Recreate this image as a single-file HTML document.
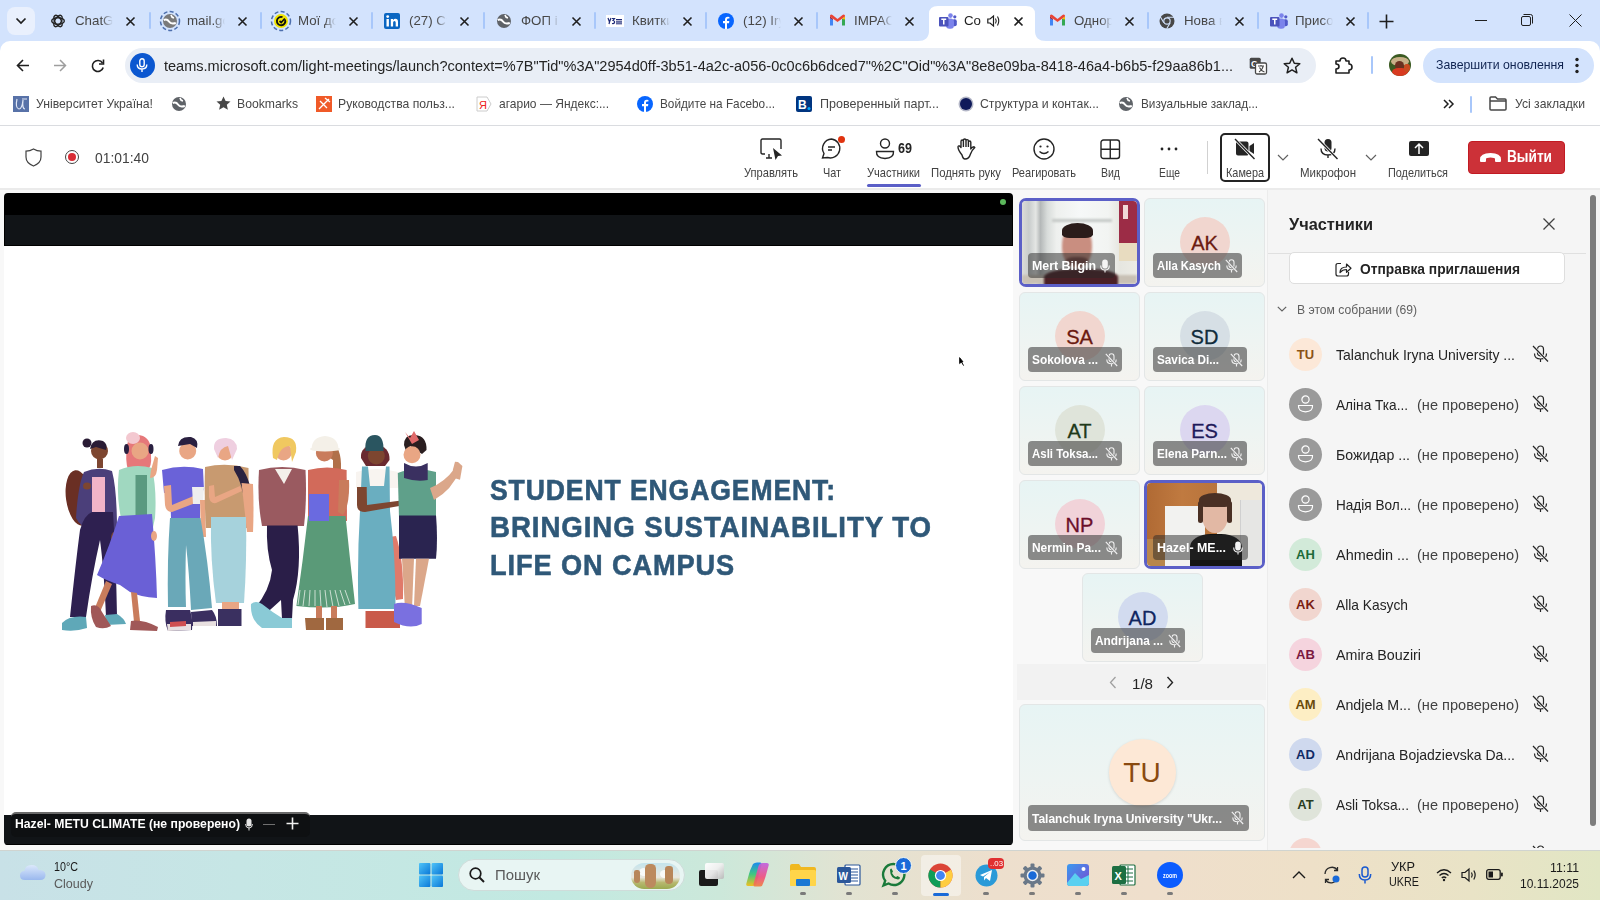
<!DOCTYPE html><html><head><meta charset="utf-8"><style>
*{margin:0;padding:0;box-sizing:border-box}
html,body{width:1600px;height:900px;overflow:hidden;background:#fff;font-family:"Liberation Sans",sans-serif;color:#1f1f1f}
.a{position:absolute}
svg{position:absolute;overflow:visible}
.t{position:absolute;white-space:nowrap}
</style></head><body>
<div class="a" style="left:0;top:0;width:1600px;height:51px;background:#d3e3fd"></div>
<div class="a" style="left:7px;top:7px;width:28px;height:28px;background:#e9f0fd;border-radius:8px"></div>
<svg style="left:15px;top:17px" width="12" height="8"><path d="M1.5 1.5 L6 6 L10.5 1.5" fill="none" stroke="#1f1f1f" stroke-width="1.7"/></svg>
<svg style="left:918px;top:0" width="130" height="42"><path d="M0 42 L0 41 Q11 41 11 31 L11 14 Q11 6 20 6 L108 6 Q117 6 117 14 L117 31 Q117 41 128 41 L128 42Z" fill="#fff"/></svg>
<svg style="left:50px;top:13px" width="16" height="16"><g fill="none" stroke="#222" stroke-width="1.4"><ellipse cx="8" cy="8" rx="6.3" ry="3.2"/><ellipse cx="8" cy="8" rx="6.3" ry="3.2" transform="rotate(60 8 8)"/><ellipse cx="8" cy="8" rx="6.3" ry="3.2" transform="rotate(120 8 8)"/></g></svg>
<div class="t" style="left:75.00px;top:13.41px;font-size:13.3px;line-height:15.96px;color:#474747;font-weight:normal;width:38px;overflow:hidden;-webkit-mask-image:linear-gradient(90deg,#000 70%,transparent 100%);">ChatGPT</div>
<svg style="left:125.5px;top:16.5px" width="9" height="9"><path d="M0.5 0.5 L8.5 8.5 M8.5 0.5 L0.5 8.5" stroke="#1f1f1f" stroke-width="1.6"/></svg>
<svg style="left:162px;top:13px" width="16" height="16"><circle cx="8" cy="8" r="9.5" fill="none" stroke="#4d6fae" stroke-width="1.5" stroke-dasharray="4 2.3"/><circle cx="8" cy="8" r="7" fill="#7a7a7a"/><path d="M1.8 7 Q5 5.5 7 8.5 Q8.8 11.5 13.8 10" fill="none" stroke="#fff" stroke-width="2"/><path d="M9 2 Q9.5 4.5 12 5" fill="none" stroke="#fff" stroke-width="1.6"/></svg>
<div class="t" style="left:187.00px;top:13.41px;font-size:13.3px;line-height:15.96px;color:#474747;font-weight:normal;width:38px;overflow:hidden;-webkit-mask-image:linear-gradient(90deg,#000 70%,transparent 100%);">mail.gov</div>
<svg style="left:237.5px;top:16.5px" width="9" height="9"><path d="M0.5 0.5 L8.5 8.5 M8.5 0.5 L0.5 8.5" stroke="#1f1f1f" stroke-width="1.6"/></svg>
<svg style="left:273px;top:13px" width="16" height="16"><circle cx="8" cy="8" r="9.5" fill="none" stroke="#4d6fae" stroke-width="1.5" stroke-dasharray="4 2.3"/><circle cx="8" cy="8" r="7" fill="#f2e600"/><path d="M12 6.5 A4.2 4.2 0 1 1 9.5 4.1" fill="none" stroke="#111" stroke-width="1.9"/><path d="M6.5 8 L8.2 9.5 L11.8 5.5" fill="none" stroke="#111" stroke-width="1.7"/></svg>
<div class="t" style="left:298.00px;top:13.41px;font-size:13.3px;line-height:15.96px;color:#474747;font-weight:normal;width:38px;overflow:hidden;-webkit-mask-image:linear-gradient(90deg,#000 70%,transparent 100%);">Мої документи</div>
<svg style="left:348.5px;top:16.5px" width="9" height="9"><path d="M0.5 0.5 L8.5 8.5 M8.5 0.5 L0.5 8.5" stroke="#1f1f1f" stroke-width="1.6"/></svg>
<svg style="left:384px;top:13px" width="16" height="16"><rect x="0" y="0" width="16" height="16" rx="2" fill="#0a66c2"/><rect x="2.5" y="6" width="2.4" height="7.5" fill="#fff"/><circle cx="3.7" cy="3.6" r="1.4" fill="#fff"/><path d="M6.8 6 L9 6 L9 7.2 Q9.8 5.8 11.5 5.8 Q14 5.8 14 9 L14 13.5 L11.7 13.5 L11.7 9.5 Q11.7 8 10.5 8 Q9.1 8 9.1 9.6 L9.1 13.5 L6.8 13.5Z" fill="#fff"/></svg>
<div class="t" style="left:409.00px;top:13.41px;font-size:13.3px;line-height:15.96px;color:#474747;font-weight:normal;width:38px;overflow:hidden;-webkit-mask-image:linear-gradient(90deg,#000 70%,transparent 100%);">(27) Стрічка</div>
<svg style="left:459.5px;top:16.5px" width="9" height="9"><path d="M0.5 0.5 L8.5 8.5 M8.5 0.5 L0.5 8.5" stroke="#1f1f1f" stroke-width="1.6"/></svg>
<svg style="left:496px;top:13px" width="16" height="16"><circle cx="8" cy="8" r="7" fill="#5f6368"/><path d="M1.8 7 Q5 5.5 7 8.5 Q8.8 11.5 13.8 10" fill="none" stroke="#fff" stroke-width="2"/><path d="M9 2 Q9.5 4.5 12 5" fill="none" stroke="#fff" stroke-width="1.6"/></svg>
<div class="t" style="left:521.00px;top:13.41px;font-size:13.3px;line-height:15.96px;color:#474747;font-weight:normal;width:38px;overflow:hidden;-webkit-mask-image:linear-gradient(90deg,#000 70%,transparent 100%);">ФОП і</div>
<svg style="left:571.5px;top:16.5px" width="9" height="9"><path d="M0.5 0.5 L8.5 8.5 M8.5 0.5 L0.5 8.5" stroke="#1f1f1f" stroke-width="1.6"/></svg>
<svg style="left:607px;top:13px" width="16" height="16"><rect x="-1" y="2" width="18" height="12" fill="#fff"/><path d="M1 5 L2.5 9 L4 5 M2.5 9 L2 11" fill="none" stroke="#1e2a78" stroke-width="1.2"/><path d="M5 5.5 L7.5 5.5 L6 7.5 Q8 8 7.5 9.5 Q7 11 5 10.5" fill="none" stroke="#1e2a78" stroke-width="1.2"/><rect x="9" y="6" width="6" height="1.3" fill="#1e2a78"/><rect x="9" y="8.3" width="6" height="1.3" fill="#1e2a78"/><rect x="9" y="10.3" width="6" height="1" fill="#1e2a78"/></svg>
<div class="t" style="left:632.00px;top:13.41px;font-size:13.3px;line-height:15.96px;color:#474747;font-weight:normal;width:38px;overflow:hidden;-webkit-mask-image:linear-gradient(90deg,#000 70%,transparent 100%);">Квитки</div>
<svg style="left:682.5px;top:16.5px" width="9" height="9"><path d="M0.5 0.5 L8.5 8.5 M8.5 0.5 L0.5 8.5" stroke="#1f1f1f" stroke-width="1.6"/></svg>
<svg style="left:718px;top:13px" width="16" height="16"><circle cx="8" cy="8" r="8" fill="#0866ff"/><path d="M9 16 L9 10.3 L11 10.3 L11.3 8 L9 8 L9 6.8 Q9 5.6 10.2 5.6 L11.4 5.6 L11.4 3.9 Q10.6 3.8 9.9 3.8 Q7 3.8 7 6.7 L7 8 L5 8 L5 10.3 L7 10.3 L7 16Z" fill="#fff"/></svg>
<div class="t" style="left:743.00px;top:13.41px;font-size:13.3px;line-height:15.96px;color:#474747;font-weight:normal;width:38px;overflow:hidden;-webkit-mask-image:linear-gradient(90deg,#000 70%,transparent 100%);">(12) Iryna</div>
<svg style="left:793.5px;top:16.5px" width="9" height="9"><path d="M0.5 0.5 L8.5 8.5 M8.5 0.5 L0.5 8.5" stroke="#1f1f1f" stroke-width="1.6"/></svg>
<svg style="left:829px;top:12px" width="17" height="16"><path d="M1 4.5 L1 13.5 L4 13.5 L4 7Z" fill="#4285f4"/><path d="M16 4.5 L16 13.5 L13 13.5 L13 7Z" fill="#34a853"/><path d="M1 4.5 L8.5 10 L16 4.5 L16 3.5 Q15 2 13.5 3 L8.5 7 L3.5 3 Q2 2 1 3.5Z" fill="#ea4335"/><path d="M13 7 L16 4.6 L16 7.5Z" fill="#fbbc04"/><path d="M1 4.6 L4 7 L4 8 L1 6Z" fill="#c5221f"/></svg>
<div class="t" style="left:854.00px;top:13.41px;font-size:13.3px;line-height:15.96px;color:#474747;font-weight:normal;width:38px;overflow:hidden;-webkit-mask-image:linear-gradient(90deg,#000 70%,transparent 100%);">IMPACT</div>
<svg style="left:904.5px;top:16.5px" width="9" height="9"><path d="M0.5 0.5 L8.5 8.5 M8.5 0.5 L0.5 8.5" stroke="#1f1f1f" stroke-width="1.6"/></svg>
<svg style="left:939px;top:13px" width="18" height="16"><circle cx="11.5" cy="2.6" r="2.3" fill="#7b83eb"/><circle cx="15.8" cy="3.8" r="1.6" fill="#5059c9"/><rect x="13.2" y="6.3" width="4.6" height="7" rx="2" fill="#5059c9"/><rect x="7" y="5.5" width="8" height="10.3" rx="3.5" fill="#7b83eb"/><rect x="0" y="4" width="9.5" height="9.5" rx="1" fill="#4b53bc"/><path d="M2.3 6.3 L7.2 6.3 M4.75 6.3 L4.75 11.5" stroke="#fff" stroke-width="1.5"/></svg>
<div class="t" style="left:964.00px;top:13.41px;font-size:13.3px;line-height:15.96px;color:#1f1f1f;font-weight:normal;width:24px;overflow:hidden;-webkit-mask-image:linear-gradient(90deg,#000 70%,transparent 100%);">Co</div>
<svg style="left:1013.5px;top:16.5px" width="9" height="9"><path d="M0.5 0.5 L8.5 8.5 M8.5 0.5 L0.5 8.5" stroke="#1f1f1f" stroke-width="1.6"/></svg>
<svg style="left:987px;top:15px" width="13" height="12"><path d="M0.8 4 L3 4 L6.5 1 L6.5 11 L3 8 L0.8 8Z" fill="none" stroke="#1f1f1f" stroke-width="1.2"/><path d="M8.5 3.5 Q10 6 8.5 8.5 M10.5 1.5 Q13 6 10.5 10.5" fill="none" stroke="#1f1f1f" stroke-width="1.1"/></svg>
<svg style="left:1049px;top:12px" width="17" height="16"><path d="M1 4.5 L1 13.5 L4 13.5 L4 7Z" fill="#4285f4"/><path d="M16 4.5 L16 13.5 L13 13.5 L13 7Z" fill="#34a853"/><path d="M1 4.5 L8.5 10 L16 4.5 L16 3.5 Q15 2 13.5 3 L8.5 7 L3.5 3 Q2 2 1 3.5Z" fill="#ea4335"/><path d="M13 7 L16 4.6 L16 7.5Z" fill="#fbbc04"/><path d="M1 4.6 L4 7 L4 8 L1 6Z" fill="#c5221f"/></svg>
<div class="t" style="left:1074.00px;top:13.41px;font-size:13.3px;line-height:15.96px;color:#474747;font-weight:normal;width:38px;overflow:hidden;-webkit-mask-image:linear-gradient(90deg,#000 70%,transparent 100%);">Однор</div>
<svg style="left:1124.5px;top:16.5px" width="9" height="9"><path d="M0.5 0.5 L8.5 8.5 M8.5 0.5 L0.5 8.5" stroke="#1f1f1f" stroke-width="1.6"/></svg>
<svg style="left:1159px;top:13px" width="16" height="16"><circle cx="8" cy="8" r="7.5" fill="#474747"/><circle cx="8" cy="8" r="3.7" fill="#d3e3fd"/><circle cx="8" cy="8" r="2.6" fill="#474747"/><path d="M8 4.3 L15 4.3 M4.8 9.8 L1.3 3.8 M11.2 9.8 L7.7 15.8" stroke="#d3e3fd" stroke-width="1.1"/></svg>
<div class="t" style="left:1184.00px;top:13.41px;font-size:13.3px;line-height:15.96px;color:#474747;font-weight:normal;width:38px;overflow:hidden;-webkit-mask-image:linear-gradient(90deg,#000 70%,transparent 100%);">Нова вкладка</div>
<svg style="left:1234.5px;top:16.5px" width="9" height="9"><path d="M0.5 0.5 L8.5 8.5 M8.5 0.5 L0.5 8.5" stroke="#1f1f1f" stroke-width="1.6"/></svg>
<svg style="left:1270px;top:13px" width="18" height="16"><circle cx="11.5" cy="2.6" r="2.3" fill="#7b83eb"/><circle cx="15.8" cy="3.8" r="1.6" fill="#5059c9"/><rect x="13.2" y="6.3" width="4.6" height="7" rx="2" fill="#5059c9"/><rect x="7" y="5.5" width="8" height="10.3" rx="3.5" fill="#7b83eb"/><rect x="0" y="4" width="9.5" height="9.5" rx="1" fill="#4b53bc"/><path d="M2.3 6.3 L7.2 6.3 M4.75 6.3 L4.75 11.5" stroke="#fff" stroke-width="1.5"/></svg>
<div class="t" style="left:1295.00px;top:13.41px;font-size:13.3px;line-height:15.96px;color:#474747;font-weight:normal;width:38px;overflow:hidden;-webkit-mask-image:linear-gradient(90deg,#000 70%,transparent 100%);">Присоединиться</div>
<svg style="left:1345.5px;top:16.5px" width="9" height="9"><path d="M0.5 0.5 L8.5 8.5 M8.5 0.5 L0.5 8.5" stroke="#1f1f1f" stroke-width="1.6"/></svg>
<div class="a" style="left:149px;top:12px;width:2px;height:17px;background:#a8c7fa;border-radius:1px"></div>
<div class="a" style="left:260px;top:12px;width:2px;height:17px;background:#a8c7fa;border-radius:1px"></div>
<div class="a" style="left:371px;top:12px;width:2px;height:17px;background:#a8c7fa;border-radius:1px"></div>
<div class="a" style="left:483px;top:12px;width:2px;height:17px;background:#a8c7fa;border-radius:1px"></div>
<div class="a" style="left:594px;top:12px;width:2px;height:17px;background:#a8c7fa;border-radius:1px"></div>
<div class="a" style="left:705px;top:12px;width:2px;height:17px;background:#a8c7fa;border-radius:1px"></div>
<div class="a" style="left:816px;top:12px;width:2px;height:17px;background:#a8c7fa;border-radius:1px"></div>
<div class="a" style="left:1147px;top:12px;width:2px;height:17px;background:#a8c7fa;border-radius:1px"></div>
<div class="a" style="left:1257px;top:12px;width:2px;height:17px;background:#a8c7fa;border-radius:1px"></div>
<div class="a" style="left:1367px;top:12px;width:2px;height:17px;background:#a8c7fa;border-radius:1px"></div>
<svg style="left:1379px;top:13.5px" width="15" height="15"><path d="M7.5 0.5 L7.5 14.5 M0.5 7.5 L14.5 7.5" stroke="#1f1f1f" stroke-width="1.6"/></svg>
<div class="a" style="left:1475px;top:20px;width:12px;height:1px;background:#1f1f1f"></div>
<svg style="left:1521px;top:14px" width="12" height="12"><rect x="0.5" y="2.5" width="9" height="9" rx="1.5" fill="none" stroke="#1f1f1f" stroke-width="1"/><path d="M2.5 0.5 L9.5 0.5 Q11.5 0.5 11.5 2.5 L11.5 9.5" fill="none" stroke="#1f1f1f" stroke-width="1"/></svg>
<svg style="left:1569px;top:14px" width="13" height="13"><path d="M0.5 0.5 L12.5 12.5 M12.5 0.5 L0.5 12.5" stroke="#1f1f1f" stroke-width="1"/></svg>
<div class="a" style="left:0;top:41px;width:1600px;height:45px;background:#fff;border-radius:10px 10px 0 0"></div>
<svg style="left:16px;top:59px" width="14" height="13"><path d="M13 6.5 L1.5 6.5 M7 1 L1.5 6.5 L7 12" fill="none" stroke="#1f1f1f" stroke-width="1.6"/></svg>
<svg style="left:53px;top:59px" width="14" height="13"><path d="M1 6.5 L12.5 6.5 M7 1 L12.5 6.5 L7 12" fill="none" stroke="#9e9e9e" stroke-width="1.5"/></svg>
<svg style="left:91px;top:59px" width="14" height="14"><path d="M11.5 4 A5.5 5.5 0 1 0 12.2 8.5" fill="none" stroke="#1f1f1f" stroke-width="1.6"/><path d="M12.5 0.5 L12.5 5 L8 5" fill="none" stroke="#1f1f1f" stroke-width="1.6"/></svg>
<div class="a" style="left:125px;top:48px;width:1191px;height:35px;background:#e9eef6;border-radius:18px"></div>
<div class="a" style="left:129.5px;top:53px;width:25px;height:25px;background:#0b57d0;border-radius:50%"></div>
<svg style="left:136px;top:58px" width="12" height="15"><rect x="3.8" y="0.8" width="4.4" height="8" rx="2.2" fill="none" stroke="#fff" stroke-width="1.4"/><path d="M1.2 6.5 Q1.2 11 6 11 Q10.8 11 10.8 6.5 M6 11 L6 14" fill="none" stroke="#fff" stroke-width="1.4"/></svg>
<div class="t" style="left:164.00px;top:57.13px;font-size:15.5px;line-height:18.6px;color:#242424;font-weight:normal;transform:scaleX(0.9376);transform-origin:0 0;">teams.microsoft.com/light-meetings/launch?context=%7B&quot;Tid&quot;%3A&quot;2954d0ff-3b51-4a2c-a056-0c0c6b6dced7&quot;%2C&quot;Oid&quot;%3A&quot;8e8e09ba-8418-46a4-b6b5-f29aa86b1...</div>
<svg style="left:1249px;top:57px" width="19" height="18"><rect x="0.7" y="0.7" width="11" height="11" rx="1.5" fill="#474747"/><text x="2" y="9.5" font-family="Liberation Sans" font-weight="bold" font-size="9" fill="#fff">G</text><rect x="6.5" y="6" width="11" height="11" rx="1.5" fill="#fff" stroke="#474747" stroke-width="1.3"/><path d="M9 9 L15 9 M12 8 L12 9 M10 15 Q14 12 14 9 M10.5 10.5 Q12 14 15.5 15" fill="none" stroke="#474747" stroke-width="1.1"/></svg>
<svg style="left:1283px;top:57px" width="18" height="17"><path d="M9 1.2 L11.3 6.2 L16.8 6.7 L12.6 10.3 L13.9 15.8 L9 12.9 L4.1 15.8 L5.4 10.3 L1.2 6.7 L6.7 6.2Z" fill="none" stroke="#1f1f1f" stroke-width="1.5" stroke-linejoin="round"/></svg>
<svg style="left:1335px;top:57px" width="18" height="17"><path d="M1 4 L5 4 Q5 1 8 1 Q11 1 11 4 L14 4 L14 7 Q17 7 17 10 Q17 13 14 13 L14 16 L1 16 L1 12 Q4 12 4 9.5 Q4 7 1 7Z" fill="none" stroke="#1f1f1f" stroke-width="1.6" stroke-linejoin="round"/></svg>
<div class="a" style="left:1371px;top:56px;width:2px;height:18px;background:#a8c7fa;border-radius:1px"></div>
<div class="a" style="left:1389px;top:54px;width:22px;height:22px;border-radius:50%;overflow:hidden;background:#3a5a22"><div class="a" style="left:2px;top:3px;width:18px;height:9px;border-radius:50%;background:#c8b088"></div><div class="a" style="left:6px;top:7px;width:9px;height:9px;border-radius:50%;background:#6a3020"></div><div class="a" style="left:3px;top:14px;width:16px;height:10px;border-radius:40%;background:#d83a20"></div><div class="a" style="left:15px;top:10px;width:6px;height:8px;border-radius:40%;background:#c84a20"></div></div>
<div class="a" style="left:1423px;top:48px;width:171px;height:35px;background:#d3e3fd;border-radius:18px"></div>
<div class="t" style="left:1436.00px;top:57.2px;font-size:13px;line-height:15.6px;color:#0f2350;font-weight:normal;transform:scaleX(0.9462);transform-origin:0 0;">Завершити оновлення</div>
<svg style="left:1574px;top:57px" width="6" height="18"><circle cx="3" cy="2.5" r="1.7" fill="#1f1f1f"/><circle cx="3" cy="8.5" r="1.7" fill="#1f1f1f"/><circle cx="3" cy="14.5" r="1.7" fill="#1f1f1f"/></svg>
<div class="a" style="left:0;top:125px;width:1600px;height:1px;background:#dadce0"></div>
<svg style="left:13px;top:96px" width="16" height="16"><rect width="16" height="16" fill="#5872a8"/><path d="M4 3 Q2 12 6 13 Q9 13 10 4 M10 4 Q9 13 12 13 M9 3 L14 3" fill="none" stroke="#dfe6f5" stroke-width="1.2"/></svg>
<div class="t" style="left:36.00px;top:96.22px;font-size:13.5px;line-height:16.2px;color:#474747;font-weight:normal;transform:scaleX(0.9060);transform-origin:0 0;">Університет Україна!</div>
<svg style="left:171px;top:96px" width="16" height="16"><circle cx="8" cy="8" r="7" fill="#5f6368"/><path d="M1.8 7 Q5 5.5 7 8.5 Q8.8 11.5 13.8 10" fill="none" stroke="#fff" stroke-width="2"/><path d="M9 2 Q9.5 4.5 12 5" fill="none" stroke="#fff" stroke-width="1.6"/></svg>
<svg style="left:216px;top:96px" width="15" height="15"><path d="M7.5 0.5 L9.6 5.1 L14.5 5.5 L10.8 8.8 L11.9 13.8 L7.5 11.2 L3.1 13.8 L4.2 8.8 L0.5 5.5 L5.4 5.1Z" fill="#474747"/></svg>
<div class="t" style="left:237.00px;top:96.22px;font-size:13.5px;line-height:16.2px;color:#474747;font-weight:normal;transform:scaleX(0.9033);transform-origin:0 0;">Bookmarks</div>
<svg style="left:316px;top:96px" width="16" height="16"><rect width="16" height="16" fill="#f05a28"/><path d="M3 13 L13 3 M4 5 L11 12 M9 2 L14 6" stroke="#fff" stroke-width="1.3"/></svg>
<div class="t" style="left:338.00px;top:96.22px;font-size:13.5px;line-height:16.2px;color:#474747;font-weight:normal;transform:scaleX(0.9034);transform-origin:0 0;">Руководства польз...</div>
<svg style="left:476px;top:96px" width="16" height="16"><path d="M1 1 L11 1 L15 8 L11 15 L1 15Z" fill="#fff" stroke="#ccc" stroke-width="1"/><text x="3" y="12.5" font-family="Liberation Sans" font-size="11" fill="#e22">Я</text></svg>
<div class="t" style="left:499.00px;top:96.22px;font-size:13.5px;line-height:16.2px;color:#474747;font-weight:normal;transform:scaleX(0.8899);transform-origin:0 0;">агарио — Яндекс:...</div>
<svg style="left:637px;top:96px" width="16" height="16"><circle cx="8" cy="8" r="8" fill="#0866ff"/><path d="M9 16 L9 10.3 L11 10.3 L11.3 8 L9 8 L9 6.8 Q9 5.6 10.2 5.6 L11.4 5.6 L11.4 3.9 Q10.6 3.8 9.9 3.8 Q7 3.8 7 6.7 L7 8 L5 8 L5 10.3 L7 10.3 L7 16Z" fill="#fff"/></svg>
<div class="t" style="left:660.00px;top:96.22px;font-size:13.5px;line-height:16.2px;color:#474747;font-weight:normal;transform:scaleX(0.8728);transform-origin:0 0;">Войдите на Facebo...</div>
<svg style="left:796px;top:96px" width="16" height="16"><rect width="16" height="16" rx="2" fill="#003580"/><text x="2" y="13" font-family="Liberation Sans" font-weight="bold" font-size="12" fill="#fff">B</text><circle cx="13" cy="12.5" r="1.5" fill="#00a6ff"/></svg>
<div class="t" style="left:820.00px;top:96.22px;font-size:13.5px;line-height:16.2px;color:#474747;font-weight:normal;transform:scaleX(0.9287);transform-origin:0 0;">Проверенный парт...</div>
<svg style="left:958px;top:96px" width="16" height="16"><circle cx="8" cy="8" r="7.5" fill="#6a7090" opacity=".5"/><circle cx="8" cy="8" r="6" fill="#0f1a5a"/></svg>
<div class="t" style="left:980.00px;top:96.22px;font-size:13.5px;line-height:16.2px;color:#474747;font-weight:normal;transform:scaleX(0.9097);transform-origin:0 0;">Структура и контак...</div>
<svg style="left:1118px;top:96px" width="16" height="16"><circle cx="8" cy="8" r="7" fill="#5f6368"/><path d="M1.8 7 Q5 5.5 7 8.5 Q8.8 11.5 13.8 10" fill="none" stroke="#fff" stroke-width="2"/><path d="M9 2 Q9.5 4.5 12 5" fill="none" stroke="#fff" stroke-width="1.6"/></svg>
<div class="t" style="left:1141.00px;top:96.22px;font-size:13.5px;line-height:16.2px;color:#474747;font-weight:normal;transform:scaleX(0.8712);transform-origin:0 0;">Визуальные заклад...</div>
<svg style="left:1489px;top:96px" width="18" height="15"><path d="M1 2 Q1 1 2 1 L6.5 1 L8.5 3 L16 3 Q17 3 17 4 L17 13 Q17 14 16 14 L2 14 Q1 14 1 13Z M1 5 L17 5" fill="none" stroke="#474747" stroke-width="1.5"/></svg>
<div class="t" style="left:1515.00px;top:96.22px;font-size:13.5px;line-height:16.2px;color:#474747;font-weight:normal;transform:scaleX(0.9016);transform-origin:0 0;">Усі закладки</div>
<svg style="left:1443px;top:99px" width="12" height="10"><path d="M1 1 L5 5 L1 9 M6 1 L10 5 L6 9" fill="none" stroke="#1f1f1f" stroke-width="1.5"/></svg>
<div class="a" style="left:1470px;top:96px;width:2px;height:17px;background:#a8c7fa;border-radius:1px"></div>
<div class="a" style="left:0;top:188px;width:1600px;height:2px;background:#ebebeb"></div>
<svg style="left:25px;top:148px" width="17" height="19"><path d="M8.5 1 Q12 3.2 16 3.2 L16 9 Q16 15 8.5 18 Q1 15 1 9 L1 3.2 Q5 3.2 8.5 1Z" fill="none" stroke="#424242" stroke-width="1.2"/></svg>
<div class="a" style="left:65px;top:150px;width:14px;height:14px;border-radius:50%;border:1.3px solid #424242;background:#fff"></div>
<div class="a" style="left:68px;top:153px;width:8px;height:8px;border-radius:50%;background:#d92c35"></div>
<div class="t" style="left:95.00px;top:148.8px;font-size:15px;line-height:18.0px;color:#424242;font-weight:normal;transform:scaleX(0.9248);transform-origin:0 0;">01:01:40</div>
<svg style="left:760px;top:138px" width="24" height="24"><path d="M5 16 L2.5 16 Q1 16 1 14.5 L1 2.5 Q1 1 2.5 1 L19.5 1 Q21 1 21 2.5 L21 11" fill="none" stroke="#242424" stroke-width="1.4"/><path d="M6 20 L12 20 M9 16 L9 20" fill="none" stroke="#242424" stroke-width="1.4"/><path d="M13 10 L22 17.5 L18 18 L15.5 22Z" fill="#242424"/></svg>
<div class="t" style="left:744.00px;top:164.7px;font-size:13px;line-height:15.6px;color:#424242;font-weight:normal;transform:scaleX(0.8552);transform-origin:0 0;">Управлять</div>
<svg style="left:821px;top:138px" width="24" height="22"><path d="M10.5 1 A9.5 9.5 0 1 1 6.5 19.5 L1.5 20 L3 15.5 A9.5 9.5 0 0 1 10.5 1Z" fill="none" stroke="#242424" stroke-width="1.4"/><path d="M7 9 L14 9 M7 12 L11 12" fill="none" stroke="#242424" stroke-width="1.4"/></svg>
<div class="a" style="left:838px;top:136px;width:7px;height:7px;border-radius:50%;background:#e0330f"></div>
<div class="t" style="left:823.00px;top:164.7px;font-size:13px;line-height:15.6px;color:#424242;font-weight:normal;transform:scaleX(0.8342);transform-origin:0 0;">Чат</div>
<svg style="left:875px;top:138px" width="20" height="22"><circle cx="10" cy="5.5" r="4.5" fill="none" stroke="#242424" stroke-width="1.4"/><path d="M1.5 13.5 L18.5 13.5 Q19 20 10 20.5 Q1 20 1.5 13.5Z" fill="none" stroke="#242424" stroke-width="1.4"/></svg>
<div class="t" style="left:898.00px;top:139.75px;font-size:14px;line-height:16.8px;color:#242424;font-weight:bold;transform:scaleX(0.8987);transform-origin:0 0;">69</div>
<div class="t" style="left:866.50px;top:164.7px;font-size:13px;line-height:15.6px;color:#424242;font-weight:normal;transform:scaleX(0.8533);transform-origin:0 0;">Участники</div>
<div class="a" style="left:867px;top:184px;width:54px;height:3px;border-radius:2px;background:#5b5fc7"></div>
<svg style="left:957px;top:138px" width="20" height="22"><path d="M5 17 Q1 12 1 9 Q1 7.5 2.5 8 L4 9.5 L4 3.5 Q4 2 5.2 2 Q6.4 2 6.4 3.5 L6.4 2.2 Q6.4 1 7.7 1 Q9 1 9 2.2 L9 2.5 Q9 1.6 10.2 1.6 Q11.4 1.6 11.4 2.8 L11.4 4 Q11.4 3 12.6 3 Q13.8 3 13.8 4.2 L13.8 11 Q15 9 17 8.8 L17.8 9.5 Q15 12 13.5 16 Q12 21 8 21 Q6 21 5 17Z M6.4 3.5 L6.4 9 M9 2.5 L9 9 M11.4 4 L11.4 9" fill="none" stroke="#242424" stroke-width="1.4" stroke-linejoin="round"/></svg>
<div class="t" style="left:931.00px;top:164.7px;font-size:13px;line-height:15.6px;color:#424242;font-weight:normal;transform:scaleX(0.8711);transform-origin:0 0;">Поднять руку</div>
<svg style="left:1033px;top:138px" width="22" height="22"><circle cx="11" cy="11" r="10" fill="none" stroke="#242424" stroke-width="1.4"/><circle cx="7.5" cy="8.5" r="1.1" fill="#242424"/><circle cx="14.5" cy="8.5" r="1.1" fill="#242424"/><path d="M6.5 13.5 Q11 17.5 15.5 13.5" fill="none" stroke="#242424" stroke-width="1.4"/></svg>
<div class="t" style="left:1012.00px;top:164.7px;font-size:13px;line-height:15.6px;color:#424242;font-weight:normal;transform:scaleX(0.8480);transform-origin:0 0;">Реагировать</div>
<svg style="left:1100px;top:139px" width="21" height="21"><rect x="1" y="1" width="18.5" height="18.5" rx="2.5" fill="none" stroke="#242424" stroke-width="1.4"/><path d="M10.25 1 L10.25 19.5 M1 10.25 L19.5 10.25" fill="none" stroke="#242424" stroke-width="1.4"/></svg>
<div class="t" style="left:1100.50px;top:164.7px;font-size:13px;line-height:15.6px;color:#424242;font-weight:normal;transform:scaleX(0.8074);transform-origin:0 0;">Вид</div>
<svg style="left:1160px;top:147px" width="18" height="4"><circle cx="2" cy="2" r="1.4" fill="#242424"/><circle cx="9" cy="2" r="1.4" fill="#242424"/><circle cx="16" cy="2" r="1.4" fill="#242424"/></svg>
<div class="t" style="left:1158.50px;top:164.7px;font-size:13px;line-height:15.6px;color:#424242;font-weight:normal;transform:scaleX(0.7939);transform-origin:0 0;">Еще</div>
<div class="a" style="left:1207px;top:141px;width:1px;height:33px;background:#d1d1d1"></div>
<div class="a" style="left:1220px;top:133px;width:50px;height:49px;border:2px solid #242424;border-radius:5px"></div>
<svg style="left:1234px;top:138px" width="24" height="22"><path d="M2 5 Q2 3.5 3.5 3.5 L12.5 3.5 Q14.5 3.5 14.5 5.5 L14.5 16 Q14.5 17.5 12.5 17.5 L4 17.5 Q2 17.5 2 15.5Z M15.5 8 L20 5 L20 16 L15.5 13Z" fill="#242424"/><path d="M1 1 L20.5 21" stroke="#fff" stroke-width="3"/><path d="M1 1 L20.5 21" stroke="#242424" stroke-width="1.4"/></svg>
<div class="t" style="left:1226.00px;top:164.7px;font-size:13px;line-height:15.6px;color:#424242;font-weight:normal;transform:scaleX(0.8363);transform-origin:0 0;">Камера</div>
<svg style="left:1277px;top:154px" width="12" height="7"><path d="M1 1 L6 6 L11 1" fill="none" stroke="#616161" stroke-width="1.2"/></svg>
<svg style="left:1317px;top:138px" width="24" height="23"><rect x="7.5" y="1" width="7" height="12.5" rx="3.5" fill="#242424"/><path d="M4 10.5 Q4 17 11 17 Q18 17 18 10.5 M11 17 L11 20" fill="none" stroke="#242424" stroke-width="1.4"/><path d="M1 1 L20.5 21" stroke="#fff" stroke-width="3"/><path d="M1 1 L20.5 21" stroke="#242424" stroke-width="1.4"/></svg>
<div class="t" style="left:1300.00px;top:164.7px;font-size:13px;line-height:15.6px;color:#424242;font-weight:normal;transform:scaleX(0.8841);transform-origin:0 0;">Микрофон</div>
<svg style="left:1365px;top:154px" width="12" height="7"><path d="M1 1 L6 6 L11 1" fill="none" stroke="#616161" stroke-width="1.2"/></svg>
<div class="a" style="left:1409px;top:141px;width:20px;height:15px;border-radius:2px;background:#242424"></div>
<svg style="left:1413px;top:142px" width="12" height="13"><path d="M6 12 L6 2 M2 6 L6 2 L10 6" fill="none" stroke="#fff" stroke-width="1.5"/></svg>
<div class="t" style="left:1388.00px;top:164.7px;font-size:13px;line-height:15.6px;color:#424242;font-weight:normal;transform:scaleX(0.8357);transform-origin:0 0;">Поделиться</div>
<div class="a" style="left:1468px;top:141px;width:97px;height:33px;border-radius:4px;background:#cc3138;border:1px solid #c21a22"></div>
<svg style="left:1479px;top:152px" width="23" height="11"><path d="M1 7.5 Q1 1 11.5 1 Q22 1 22 7.5 L22 9 Q22 10 21 10 L17 10 Q16 10 16 9 L16 7 Q16 5.5 11.5 5.5 Q7 5.5 7 7 L7 9 Q7 10 6 10 L2 10 Q1 10 1 9Z" fill="#fff"/></svg>
<div class="t" style="left:1507.00px;top:147.38px;font-size:16.5px;line-height:19.8px;color:#fff;font-weight:bold;transform:scaleX(0.8276);transform-origin:0 0;">Выйти</div>
<div class="a" style="left:0;top:190px;width:1600px;height:660px;background:#f8f8f8"></div>
<div class="a" style="left:4px;top:193px;width:1009px;height:652px;background:#fff;border-radius:4px;overflow:hidden"><div class="a" style="left:0;top:0;width:1009px;height:22px;background:#000"></div><div class="a" style="left:0;top:22px;width:1009px;height:31px;background:#111417;border-left:1px solid #000;border-right:1px solid #000;border-bottom:1px solid #000"></div><div class="a" style="left:0;top:622px;width:1009px;height:30px;background:#111417;border-bottom:1px solid #000"></div></div>
<div class="a" style="left:1000px;top:199px;width:6px;height:6px;border-radius:50%;background:#5cb85c"></div>
<svg style="left:959px;top:357px;filter:blur(.3px)" width="8" height="10"><path d="M0.6 0.6 L0.6 6.6 L2.2 5.2 L4 4.8 Z" fill="#000" stroke="#000" stroke-width="0.8" stroke-linejoin="round"/><path d="M2.5 5 L4.6 8.6" stroke="#000" stroke-width="1"/></svg>
<div class="t" style="left:490.00px;top:471.61px;font-size:30px;line-height:36.0px;color:#2f5878;font-weight:bold;transform:scaleX(0.8856);transform-origin:0 0;letter-spacing:1px;-webkit-text-stroke:0.6px #2f5878;">STUDENT ENGAGEMENT:</div>
<div class="t" style="left:490.00px;top:509.11px;font-size:30px;line-height:36.0px;color:#2f5878;font-weight:bold;transform:scaleX(0.9221);transform-origin:0 0;letter-spacing:1px;-webkit-text-stroke:0.6px #2f5878;">BRINGING SUSTAINABILITY TO</div>
<div class="t" style="left:490.00px;top:546.61px;font-size:30px;line-height:36.0px;color:#2f5878;font-weight:bold;transform:scaleX(0.9052);transform-origin:0 0;letter-spacing:1px;-webkit-text-stroke:0.6px #2f5878;">LIFE ON CAMPUS</div>
<svg style="left:0;top:0" width="1" height="1"><ellipse cx="79" cy="498" rx="13" ry="28" fill="#6a2f24" transform="rotate(-8 79 498)"/><path d="M84 472 Q98 466 112 471 Q117 490 117 530 L112 532 L111 512 L93 512 L92 530 Q80 527 76 518 Q78 485 84 472Z" fill="#4b3f7a"/><path d="M92 477 L105 477 L105 513 L92 513Z" fill="#f2b4c8"/><path d="M92 512 L113 512 Q116 560 117 616 L106 617 Q104 570 100 540 Q92 575 86 617 L70 617 Q76 560 80 530 Q84 515 92 512Z" fill="#2e2050"/><path d="M62 623 Q70 615 86 617 L87 628 Q75 632 62 630Z" fill="#5fa8b8"/><path d="M105 615 L117 614 Q124 618 126 624 L106 625Z" fill="#5fa8b8"/><circle cx="99.5" cy="451" r="8.5" fill="#7d4630"/><circle cx="87" cy="443" r="4.5" fill="#2a1c35"/><path d="M90 449 Q92 438 103 441 Q108 444 106 450 L96 447Z" fill="#2a1c35"/><path d="M97 459 L103 459 L103 468 L97 468Z" fill="#7d4630"/><ellipse cx="87" cy="486" rx="4" ry="3.5" fill="#7d4630" transform="rotate(0 87 486)"/><ellipse cx="114" cy="538" rx="3" ry="6" fill="#7d4630" transform="rotate(0 114 538)"/><path d="M127 445 Q130 432 143 436 Q152 440 151 455 Q152 468 147 470 L128 470 Q125 460 127 445Z" fill="#e6787a"/><ellipse cx="133" cy="438" rx="7" ry="6" fill="#f3c8d0" transform="rotate(0 133 438)"/><circle cx="140" cy="451" r="8.5" fill="#e9a684"/><ellipse cx="126.5" cy="449" rx="2.5" ry="5" fill="#2a2040" transform="rotate(0 126.5 449)"/><ellipse cx="151" cy="449" rx="2.5" ry="5" fill="#2a2040" transform="rotate(0 151 449)"/><path d="M119 470 Q135 463 152 468 Q157 490 155 518 L152 532 L148 532 L147 516 L121 518 Q116 495 119 470Z" fill="#a0d8c0"/><path d="M135.5 475 L147 475 L147 515 L135.5 515Z" fill="#5a9a80"/><path d="M151 470 L155 456 L158 458 L157 470 Q156 478 150 478Z" fill="#e9a684"/><path d="M119 516 L152 514 Q156 560 157 598 Q140 597 130 592 L120 585 Q105 580 97 575 Q110 545 119 516Z" fill="#6a60d6"/><path d="M106 581 L112 584 L100 612 L94 610Z" fill="#c97c5c"/><path d="M131 592 L137 593 L140 621 L134 622Z" fill="#c97c5c"/><path d="M91 606 Q98 603 102 612 L111 626 Q104 630 96 627 Q90 618 91 606Z" fill="#a05858"/><path d="M131 621 Q142 619 158 627 L157 631 L130 630Z" fill="#a05858"/><ellipse cx="154" cy="536" rx="3" ry="5" fill="#e9a684" transform="rotate(0 154 536)"/><path d="M162 470 Q182 464 203 469 L204 490 L200 492 L200 518 L171 518 L170 492 L164 493Z" fill="#6a62d8"/><path d="M164 486 L171 485 L172 505 L196 495 L198 502 L172 512 Q166 512 165 505Z" fill="#e9a684"/><path d="M192 487 L204 487 L203 504 L193 504Z" fill="#eeeeee"/><path d="M200 500 L205 500 L206 537 L201 537Z" fill="#e9a684"/><path d="M170 518 L200.5 518 Q208 560 212 608 L191 610 Q189 570 186 545 Q185 580 186 607 L168 607 Q167 560 170 518Z" fill="#6aa8b8"/><path d="M166 610 L190 610 Q193 620 192 630 L168 631 Q164 622 166 610Z" fill="#3a2e60"/><path d="M167 624 L191 624 L191 630 L168 631Z" fill="#e8e0e0"/><path d="M170 622 L186 621 L186 626 L170 627Z" fill="#d05050"/><path d="M191 612 L212 610 Q217 616 217 626 L192 626Z" fill="#3a2e60"/><path d="M193 622 L216 621 L216 626 L193 626Z" fill="#e8e0e0"/><circle cx="187.7" cy="451" r="8.5" fill="#e9a684"/><path d="M178 446 Q179 436 191 437 Q199 439 197 448 L190 444 Z" fill="#2a2040"/><path d="M205 467 Q226 462 248.5 468 L249 528 L206 528 Q204 500 205 467Z" fill="#c89a70"/><path d="M234 466 L240 466 Q253 480 253 514 L246 514 Q244 485 234 470Z" fill="#2a2240"/><path d="M241.5 483 L253 484 Q254 510 253 532 L247 532Z" fill="#e9a684"/><path d="M209 486 L214 485 L215 497 L240 486 L242 491 L216 503 Q210 504 209 497Z" fill="#e9a684"/><path d="M211 517 L246 517 Q247 560 244 603 L216 603 Q210 560 211 517Z" fill="#a6d2dc"/><path d="M222 602 L239 602 L239 610 L222 610Z" fill="#e9a684"/><path d="M218 609 L241.5 609 L241.5 626 L218 626Z" fill="#3a3060"/><circle cx="225" cy="452" r="8.5" fill="#e9a684"/><path d="M214 449 Q213 438 226 438 Q237 439 237 449 L232 460 L228 446 Q220 447 218 458Z" fill="#efcfe0"/><path d="M259 470 Q282 464 305.5 470 Q307 500 304 526 L262 526 Q257 500 259 470Z" fill="#9a5a60"/><path d="M275 469 L292 469 L284 484Z" fill="#f4f0ea"/><path d="M267 525.5 L297.6 525.5 Q302 570 293 600 L292 619 L282 619 L281 600 Q270 610 262 617 L255 608 Q270 590 272 570 Q266 550 267 525.5Z" fill="#2a1e48"/><path d="M251 604 Q256 600 262 604 Q272 612 282 618 L292 618 L292 628 L262 628 Q250 620 251 604Z" fill="#8acad6"/><circle cx="283.5" cy="452" r="8.5" fill="#e9a684"/><path d="M273 458 Q270 438 284 437 Q298 437 296 452 L292 462 L290 446 Q280 446 277 460Z" fill="#f0c860"/><path d="M315 448 Q318 440 330 442 Q342 446 341 470 L340 495 L333 495 L333 460Z" fill="#b0704a"/><path d="M308 470 Q327 465 346.6 470 L347 521 L308 521Z" fill="#d26a5a"/><path d="M339 480 L349 480 Q350 505 343 515 L338 512Z" fill="#c97c5c"/><path d="M308 516 L345.5 516 Q350 560 355 604 Q330 610 296.4 606 Q303 560 308 516Z" fill="#5a9a78"/><path d="M300 590 L298 605 M305 590 L303 606 M310 590 L309 606 M315 590 L315 606 M320 590 L321 607 M325 590 L327 607 M330 590 L333 607 M335 590 L339 606 M340 590 L345 605 M345 590 L350 604" fill="none" stroke="#e8f0e8" stroke-width="0.8"/><path d="M309 494 L329 494 L329 521 L309 521Z" fill="#6a6ae0"/><path d="M316 606 L322 606 L322 619 L316 619Z" fill="#c97c5c"/><path d="M331 606 L337 606 L337 619 L331 619Z" fill="#c97c5c"/><path d="M305 618 L324 618 L324 630 L306 630Z" fill="#a06840"/><path d="M326 618 L343 618 L343 630 L326 630Z" fill="#a06840"/><circle cx="324.4" cy="453" r="8.5" fill="#c97c5c"/><path d="M311.6 449 Q312 437 325 436 Q338 437 338.5 449Z" fill="#f4f0e8"/><ellipse cx="325" cy="449" rx="15" ry="2.5" fill="#f4f0e8" transform="rotate(0 325 449)"/><path d="M389 537 L396 536 Q404 560 403 599 L396 600 Q388 570 389 537Z" fill="#e07a6a"/><path d="M361 458 Q360 446 375 445 Q390 446 389.5 460 L385 466 L366 466Z" fill="#6a2a30"/><path d="M356 472 Q376 466 398 472 L398 488 L356 488Z" fill="#f8f4f0"/><path d="M362 466.6 L368 466.6 L370 486 L384 486 L386 466.6 L389.5 466.6 L390 511 Q396 560 395.4 609 L358.4 609 Q357 560 360 511Z" fill="#6aaec0"/><path d="M357 487 L366.7 487 L367 505 L405 500 L405 505 L365 512 Q357 512 357 505Z" fill="#7d4630"/><path d="M365.5 611 L400 611 L400 628 L365.5 628Z" fill="#c95a4a"/><circle cx="376.3" cy="456" r="8.5" fill="#7d4630"/><path d="M365.5 451 Q364 435 375 435 Q384 435 383.5 451Z" fill="#2a5560"/><path d="M404 445 Q404 434 415 435 Q427 436 426.5 450 L422 454 L410 446 L407 454Z" fill="#2a1e20"/><path d="M405 432 L410 438 L414 431 L419 440 L412 444Z" fill="#e06a6a"/><circle cx="412" cy="454.7" r="8.5" fill="#e9a684"/><path d="M397.8 473 Q416 466 436 472 L436 518 L399 518Z" fill="#5fa08a"/><path d="M404 463 Q416 470 427.7 463 L427.7 480 Q416 482 404 478Z" fill="#3a3060"/><path d="M430 488 Q445 482 455 468 L460 470 Q452 490 434 500Z" fill="#dba78a"/><path d="M452.8 470 L455 461.8 L458 462 L462.4 466 L460 479.8 L454 478Z" fill="#dba78a"/><path d="M399 515.6 L436 515.6 Q438 540 436 558.7 L399 558.7Z" fill="#2a2450"/><path d="M402 558.7 L414 558.7 L412 609 L405 609Z" fill="#dba78a"/><path d="M416 558.7 L429 558.7 L420 606 L414 606Z" fill="#dba78a"/><path d="M394 604 Q404 600 421.7 608 L421.7 624 Q410 630 394 622Z" fill="#7a70e0"/></svg>
<div class="a" style="left:11px;top:812px;width:299px;height:25px;background:#0e1012;border-radius:5px;border-top:2px solid #6a6a6a"></div>
<div class="t" style="left:15.00px;top:816.22px;font-size:13.5px;line-height:16.2px;color:#fff;font-weight:bold;transform:scaleX(0.9033);transform-origin:0 0;">Hazel- METU CLIMATE (не проверено)</div>
<svg style="left:245px;top:818px" width="8" height="13"><rect x="1.5" y="0.5" width="5" height="8" rx="2.5" fill="#e6e6e6"/><path d="M0.6 6 Q0.6 10 4 10 Q7.4 10 7.4 6 M4 10 L4 12.5" fill="none" stroke="#e6e6e6" stroke-width="1"/></svg>
<div class="a" style="left:263px;top:823.5px;width:12px;height:1.3px;background:#707070"></div>
<svg style="left:286px;top:817px" width="13" height="13"><path d="M6.5 0.5 L6.5 12.5 M0.5 6.5 L12.5 6.5" stroke="#f0f0f0" stroke-width="1.6"/></svg>
<div class="a" style="left:1019px;top:198px;width:121px;height:89px;border-radius:7px;border:3px solid #5b5fc7;background:#fff;overflow:hidden">
<div class="a" style="left:0;top:0;width:115px;height:83px;background:linear-gradient(90deg,#dcdcd8 0%,#c8cccc 6%,#e4e6e4 12%,#b4b8b8 16%,#d8dcda 22%,#eef0ee 30%,#f6f8f8 50%,#f2f4f2 75%,#e6e6e0 85%,#ecebe4 100%)"></div>
<div class="a" style="left:30px;top:18px;width:60px;height:3px;background:#c4c8c6;filter:blur(1px)"></div>
<div class="a" style="left:97px;top:0;width:18px;height:42px;background:#9c2c46;filter:blur(.5px)"></div>
<div class="a" style="left:101px;top:4px;width:5px;height:14px;background:#f0d8d8;filter:blur(.6px)"></div>
<div class="a" style="left:97px;top:42px;width:18px;height:18px;background:#e8dcc0;filter:blur(.6px)"></div>
<div class="a" style="left:0;top:74px;width:115px;height:9px;background:#c8c0b4;filter:blur(1px)"></div>
<div class="a" style="left:22px;top:68px;width:74px;height:20px;border-radius:40% 40% 0 0;background:#4a2026;filter:blur(.8px)"></div>
<div class="a" style="left:40px;top:25px;width:30px;height:42px;border-radius:45% 45% 48% 48%;background:#c98e80;filter:blur(.8px)"></div>
<div class="a" style="left:40px;top:22px;width:31px;height:15px;border-radius:50% 50% 25% 25%;background:#2a1c1a;filter:blur(.7px)"></div>
<div class="a" style="left:44px;top:56px;width:22px;height:8px;border-radius:40%;background:#5a2a2a;filter:blur(1px);opacity:.7"></div>
</div>
<div class="a" style="left:1028px;top:253px;width:87px;height:25px;border-radius:4px;background:rgba(40,40,40,.5)"></div>
<div class="t" style="left:1031.50px;top:257.7px;font-size:13px;line-height:15.6px;color:#fff;font-weight:bold;transform:scaleX(0.9528);transform-origin:0 0;">Mert Bilgin</div>
<svg style="left:1100px;top:259px" width="10" height="14"><rect x="2.2" y="0.5" width="5.6" height="9" rx="2.8" fill="#f4f4f4"/><path d="M0.7 6.5 Q0.7 11 5 11 Q9.3 11 9.3 6.5 M5 11 L5 13.5" fill="none" stroke="#f4f4f4" stroke-width="1.1"/></svg>
<div class="a" style="left:1144px;top:198px;width:121px;height:89px;border-radius:6px;border:1px solid #e3e6e6;background:linear-gradient(180deg,#e7f4f4 0%,#eef4f2 55%,#f4f3ef 100%)"></div>
<div class="a" style="left:1179.5px;top:217px;width:50px;height:50px;border-radius:50%;background:#f1d6cf"></div>
<div class="t" style="left:1191.16px;top:230.57px;font-size:20px;line-height:24.0px;color:#6b1a10;font-weight:normal;-webkit-text-stroke:0.3px #6b1a10;">AK</div>
<div class="a" style="left:1153px;top:253px;width:89px;height:25px;border-radius:4px;background:rgba(60,60,60,.58)"></div>
<div class="t" style="left:1156.50px;top:257.7px;font-size:13px;line-height:15.6px;color:#fff;font-weight:bold;transform:scaleX(0.8683);transform-origin:0 0;">Alla Kasych</div>
<svg style="left:1225px;top:258.5px" width="13" height="14"><rect x="4" y="0.8" width="5" height="8" rx="2.5" fill="none" stroke="#f0f0f0" stroke-width="1.1"/><path d="M1.8 6.5 Q1.8 10.8 6.5 10.8 Q11.2 10.8 11.2 6.5 M6.5 10.8 L6.5 13.5" fill="none" stroke="#f0f0f0" stroke-width="1.1"/><path d="M0.8 0.8 L12.2 13" stroke="#8a8a8a" stroke-width="2.4"/><path d="M0.8 0.8 L12.2 13" stroke="#f0f0f0" stroke-width="1.1"/></svg>
<div class="a" style="left:1019px;top:292px;width:121px;height:89px;border-radius:6px;border:1px solid #e3e6e6;background:linear-gradient(180deg,#e7f4f4 0%,#eef4f2 55%,#f4f3ef 100%)"></div>
<div class="a" style="left:1054.5px;top:311px;width:50px;height:50px;border-radius:50%;background:#f1d6cf"></div>
<div class="t" style="left:1066.16px;top:324.57px;font-size:20px;line-height:24.0px;color:#6b1a10;font-weight:normal;-webkit-text-stroke:0.3px #6b1a10;">SA</div>
<div class="a" style="left:1028px;top:347px;width:94px;height:25px;border-radius:4px;background:rgba(60,60,60,.58)"></div>
<div class="t" style="left:1031.50px;top:351.7px;font-size:13px;line-height:15.6px;color:#fff;font-weight:bold;transform:scaleX(0.9135);transform-origin:0 0;">Sokolova ...</div>
<svg style="left:1105px;top:352.5px" width="13" height="14"><rect x="4" y="0.8" width="5" height="8" rx="2.5" fill="none" stroke="#f0f0f0" stroke-width="1.1"/><path d="M1.8 6.5 Q1.8 10.8 6.5 10.8 Q11.2 10.8 11.2 6.5 M6.5 10.8 L6.5 13.5" fill="none" stroke="#f0f0f0" stroke-width="1.1"/><path d="M0.8 0.8 L12.2 13" stroke="#8a8a8a" stroke-width="2.4"/><path d="M0.8 0.8 L12.2 13" stroke="#f0f0f0" stroke-width="1.1"/></svg>
<div class="a" style="left:1144px;top:292px;width:121px;height:89px;border-radius:6px;border:1px solid #e3e6e6;background:linear-gradient(180deg,#e7f4f4 0%,#eef4f2 55%,#f4f3ef 100%)"></div>
<div class="a" style="left:1179.5px;top:311px;width:50px;height:50px;border-radius:50%;background:#d6dfe5"></div>
<div class="t" style="left:1190.60px;top:324.57px;font-size:20px;line-height:24.0px;color:#0f2b3a;font-weight:normal;-webkit-text-stroke:0.3px #0f2b3a;">SD</div>
<div class="a" style="left:1153px;top:347px;width:94px;height:25px;border-radius:4px;background:rgba(60,60,60,.58)"></div>
<div class="t" style="left:1156.50px;top:351.7px;font-size:13px;line-height:15.6px;color:#fff;font-weight:bold;transform:scaleX(0.9030);transform-origin:0 0;">Savica Di...</div>
<svg style="left:1230px;top:352.5px" width="13" height="14"><rect x="4" y="0.8" width="5" height="8" rx="2.5" fill="none" stroke="#f0f0f0" stroke-width="1.1"/><path d="M1.8 6.5 Q1.8 10.8 6.5 10.8 Q11.2 10.8 11.2 6.5 M6.5 10.8 L6.5 13.5" fill="none" stroke="#f0f0f0" stroke-width="1.1"/><path d="M0.8 0.8 L12.2 13" stroke="#8a8a8a" stroke-width="2.4"/><path d="M0.8 0.8 L12.2 13" stroke="#f0f0f0" stroke-width="1.1"/></svg>
<div class="a" style="left:1019px;top:386px;width:121px;height:89px;border-radius:6px;border:1px solid #e3e6e6;background:linear-gradient(180deg,#e7f4f4 0%,#eef4f2 55%,#f4f3ef 100%)"></div>
<div class="a" style="left:1054.5px;top:405px;width:50px;height:50px;border-radius:50%;background:#dfe4da"></div>
<div class="t" style="left:1067.46px;top:418.57px;font-size:20px;line-height:24.0px;color:#1f3a1a;font-weight:normal;-webkit-text-stroke:0.3px #1f3a1a;">AT</div>
<div class="a" style="left:1028px;top:441px;width:94px;height:25px;border-radius:4px;background:rgba(60,60,60,.58)"></div>
<div class="t" style="left:1031.50px;top:445.7px;font-size:13px;line-height:15.6px;color:#fff;font-weight:bold;transform:scaleX(0.8811);transform-origin:0 0;">Asli Toksa...</div>
<svg style="left:1105px;top:446.5px" width="13" height="14"><rect x="4" y="0.8" width="5" height="8" rx="2.5" fill="none" stroke="#f0f0f0" stroke-width="1.1"/><path d="M1.8 6.5 Q1.8 10.8 6.5 10.8 Q11.2 10.8 11.2 6.5 M6.5 10.8 L6.5 13.5" fill="none" stroke="#f0f0f0" stroke-width="1.1"/><path d="M0.8 0.8 L12.2 13" stroke="#8a8a8a" stroke-width="2.4"/><path d="M0.8 0.8 L12.2 13" stroke="#f0f0f0" stroke-width="1.1"/></svg>
<div class="a" style="left:1144px;top:386px;width:121px;height:89px;border-radius:6px;border:1px solid #e3e6e6;background:linear-gradient(180deg,#e7f4f4 0%,#eef4f2 55%,#f4f3ef 100%)"></div>
<div class="a" style="left:1179.5px;top:405px;width:50px;height:50px;border-radius:50%;background:#dcd7f0"></div>
<div class="t" style="left:1191.16px;top:418.57px;font-size:20px;line-height:24.0px;color:#1e1a5a;font-weight:normal;-webkit-text-stroke:0.3px #1e1a5a;">ES</div>
<div class="a" style="left:1153px;top:441px;width:94px;height:25px;border-radius:4px;background:rgba(60,60,60,.58)"></div>
<div class="t" style="left:1156.50px;top:445.7px;font-size:13px;line-height:15.6px;color:#fff;font-weight:bold;transform:scaleX(0.8969);transform-origin:0 0;">Elena Parn...</div>
<svg style="left:1230px;top:446.5px" width="13" height="14"><rect x="4" y="0.8" width="5" height="8" rx="2.5" fill="none" stroke="#f0f0f0" stroke-width="1.1"/><path d="M1.8 6.5 Q1.8 10.8 6.5 10.8 Q11.2 10.8 11.2 6.5 M6.5 10.8 L6.5 13.5" fill="none" stroke="#f0f0f0" stroke-width="1.1"/><path d="M0.8 0.8 L12.2 13" stroke="#8a8a8a" stroke-width="2.4"/><path d="M0.8 0.8 L12.2 13" stroke="#f0f0f0" stroke-width="1.1"/></svg>
<div class="a" style="left:1019px;top:480px;width:121px;height:89px;border-radius:6px;border:1px solid #e3e6e6;background:linear-gradient(180deg,#e7f4f4 0%,#eef4f2 55%,#f4f3ef 100%)"></div>
<div class="a" style="left:1054.5px;top:499px;width:50px;height:50px;border-radius:50%;background:#f1d3d9"></div>
<div class="t" style="left:1065.60px;top:512.57px;font-size:20px;line-height:24.0px;color:#6b0f2a;font-weight:normal;-webkit-text-stroke:0.3px #6b0f2a;">NP</div>
<div class="a" style="left:1028px;top:535px;width:94px;height:25px;border-radius:4px;background:rgba(60,60,60,.58)"></div>
<div class="t" style="left:1031.50px;top:539.7px;font-size:13px;line-height:15.6px;color:#fff;font-weight:bold;transform:scaleX(0.9183);transform-origin:0 0;">Nermin Pa...</div>
<svg style="left:1105px;top:540.5px" width="13" height="14"><rect x="4" y="0.8" width="5" height="8" rx="2.5" fill="none" stroke="#f0f0f0" stroke-width="1.1"/><path d="M1.8 6.5 Q1.8 10.8 6.5 10.8 Q11.2 10.8 11.2 6.5 M6.5 10.8 L6.5 13.5" fill="none" stroke="#f0f0f0" stroke-width="1.1"/><path d="M0.8 0.8 L12.2 13" stroke="#8a8a8a" stroke-width="2.4"/><path d="M0.8 0.8 L12.2 13" stroke="#f0f0f0" stroke-width="1.1"/></svg>
<div class="a" style="left:1144px;top:480px;width:121px;height:89px;border-radius:7px;border:3px solid #5b5fc7;background:#fff;overflow:hidden">
<div class="a" style="left:0;top:0;width:115px;height:83px;background:#eee8dc"></div>
<div class="a" style="left:0;top:0;width:70px;height:56px;background:linear-gradient(90deg,#b06a34,#c07a40 50%,#b8743c)"></div>
<div class="a" style="left:0;top:56px;width:18px;height:27px;background:#b8864c"></div>
<div class="a" style="left:18px;top:23px;width:40px;height:60px;background:#f2f2f0"></div>
<div class="a" style="left:93px;top:17px;width:22px;height:66px;background:#e6e6e4;border-left:1px solid #d0d0d0"></div>
<div class="a" style="left:43px;top:51px;width:52px;height:32px;border-radius:40% 40% 0 0;background:#141414"></div>
<div class="a" style="left:55px;top:14px;width:26px;height:36px;border-radius:45% 45% 48% 48%;background:#e2b8a4;filter:blur(.6px)"></div>
<div class="a" style="left:52px;top:10px;width:32px;height:14px;border-radius:50% 50% 20% 20%;background:#4a3024;filter:blur(.6px)"></div>
<div class="a" style="left:51px;top:18px;width:5px;height:22px;border-radius:3px;background:#4a3024;filter:blur(.6px)"></div>
<div class="a" style="left:80px;top:18px;width:5px;height:22px;border-radius:3px;background:#4a3024;filter:blur(.6px)"></div>
</div>
<div class="a" style="left:1153px;top:535px;width:95px;height:25px;border-radius:4px;background:rgba(40,40,40,.5)"></div>
<div class="t" style="left:1156.50px;top:539.7px;font-size:13px;line-height:15.6px;color:#fff;font-weight:bold;transform:scaleX(0.9550);transform-origin:0 0;">Hazel- ME...</div>
<svg style="left:1233px;top:541px" width="10" height="14"><rect x="2.2" y="0.5" width="5.6" height="9" rx="2.8" fill="#f4f4f4"/><path d="M0.7 6.5 Q0.7 11 5 11 Q9.3 11 9.3 6.5 M5 11 L5 13.5" fill="none" stroke="#f4f4f4" stroke-width="1.1"/></svg>
<div class="a" style="left:1082px;top:573px;width:121px;height:89px;border-radius:6px;border:1px solid #e3e6e6;background:linear-gradient(180deg,#e7f4f4 0%,#eef4f2 55%,#f4f3ef 100%)"></div>
<div class="a" style="left:1117.5px;top:592px;width:50px;height:50px;border-radius:50%;background:#d2dbef"></div>
<div class="t" style="left:1128.60px;top:605.57px;font-size:20px;line-height:24.0px;color:#0f2560;font-weight:normal;-webkit-text-stroke:0.3px #0f2560;">AD</div>
<div class="a" style="left:1091px;top:628px;width:94px;height:25px;border-radius:4px;background:rgba(60,60,60,.58)"></div>
<div class="t" style="left:1094.50px;top:632.7px;font-size:13px;line-height:15.6px;color:#fff;font-weight:bold;transform:scaleX(0.9139);transform-origin:0 0;">Andrijana ...</div>
<svg style="left:1168px;top:633.5px" width="13" height="14"><rect x="4" y="0.8" width="5" height="8" rx="2.5" fill="none" stroke="#f0f0f0" stroke-width="1.1"/><path d="M1.8 6.5 Q1.8 10.8 6.5 10.8 Q11.2 10.8 11.2 6.5 M6.5 10.8 L6.5 13.5" fill="none" stroke="#f0f0f0" stroke-width="1.1"/><path d="M0.8 0.8 L12.2 13" stroke="#8a8a8a" stroke-width="2.4"/><path d="M0.8 0.8 L12.2 13" stroke="#f0f0f0" stroke-width="1.1"/></svg>
<div class="a" style="left:1017px;top:664px;width:249px;height:36px;background:#f2f2f2"></div>
<svg style="left:1109px;top:676px" width="8" height="13"><path d="M6.5 1 L1.5 6.5 L6.5 12" fill="none" stroke="#a0a0a0" stroke-width="1.3"/></svg>
<div class="t" style="left:1131.50px;top:675.75px;font-size:14px;line-height:16.8px;color:#242424;font-weight:normal;transform:scaleX(1.0787);transform-origin:0 0;">1/8</div>
<svg style="left:1166px;top:676px" width="8" height="13"><path d="M1.5 1 L6.5 6.5 L1.5 12" fill="none" stroke="#242424" stroke-width="1.4"/></svg>
<div class="a" style="left:1019px;top:704px;width:246px;height:137px;border-radius:6px;border:1px solid #e3e6e6;background:linear-gradient(180deg,#e7f4f4 0%,#eef4f2 55%,#f4f3ef 100%)"></div>
<div class="a" style="left:1108.5px;top:738.5px;width:67px;height:67px;border-radius:50%;background:#fde8d6;box-shadow:0 1px 3px rgba(0,0,0,.12)"></div>
<div class="t" style="left:1123.34px;top:755.5px;font-size:28px;line-height:33.6px;color:#8a4a10;font-weight:normal;">TU</div>
<div class="a" style="left:1028px;top:805px;width:221px;height:26px;border-radius:4px;background:rgba(60,60,60,.58)"></div>
<div class="t" style="left:1031.50px;top:810.7px;font-size:13px;line-height:15.6px;color:#fff;font-weight:bold;transform:scaleX(0.9221);transform-origin:0 0;">Talanchuk Iryna University &quot;Ukr...</div>
<svg style="left:1231px;top:811px" width="13" height="14"><rect x="4" y="0.8" width="5" height="8" rx="2.5" fill="none" stroke="#f0f0f0" stroke-width="1.1"/><path d="M1.8 6.5 Q1.8 10.8 6.5 10.8 Q11.2 10.8 11.2 6.5 M6.5 10.8 L6.5 13.5" fill="none" stroke="#f0f0f0" stroke-width="1.1"/><path d="M0.8 0.8 L12.2 13" stroke="#8a8a8a" stroke-width="2.4"/><path d="M0.8 0.8 L12.2 13" stroke="#f0f0f0" stroke-width="1.1"/></svg>
<div class="a" style="left:1267px;top:190px;width:333px;height:660px;background:#f5f5f5;border-left:1px solid #ececec"></div>
<div class="t" style="left:1289.00px;top:214.66px;font-size:16px;line-height:19.2px;color:#242424;font-weight:bold;transform:scaleX(1.0217);transform-origin:0 0;">Участники</div>
<svg style="left:1543px;top:218px" width="12" height="12"><path d="M0.5 0.5 L11.5 11.5 M11.5 0.5 L0.5 11.5" stroke="#424242" stroke-width="1.3"/></svg>
<div class="a" style="left:1268px;top:253px;width:318px;height:1px;background:#e0e0e0"></div>
<div class="a" style="left:1289px;top:252px;width:276px;height:32px;background:#fff;border:1px solid #dedede;border-radius:5px"></div>
<svg style="left:1335px;top:261px" width="17" height="16"><path d="M6 2.5 L3 2.5 Q1 2.5 1 4.5 L1 13 Q1 15 3 15 L11.5 15 Q13.5 15 13.5 13 L13.5 11" fill="none" stroke="#242424" stroke-width="1.2"/><path d="M5 11.5 Q5 6 11.5 6 L11.5 3 L16 7.2 L11.5 11.3 L11.5 8.5 Q7.5 8.5 5 11.5Z" fill="none" stroke="#242424" stroke-width="1.2" stroke-linejoin="round"/></svg>
<div class="t" style="left:1360.00px;top:259.8px;font-size:15px;line-height:18.0px;color:#242424;font-weight:bold;transform:scaleX(0.9201);transform-origin:0 0;">Отправка приглашения</div>
<svg style="left:1277px;top:306px" width="10" height="6"><path d="M0.8 0.8 L5 5 L9.2 0.8" fill="none" stroke="#616161" stroke-width="1.2"/></svg>
<div class="t" style="left:1297.00px;top:301.7px;font-size:13px;line-height:15.6px;color:#616161;font-weight:normal;transform:scaleX(0.9343);transform-origin:0 0;">В этом собрании (69)</div>
<div class="a" style="left:1267px;top:326px;width:323px;height:522px;overflow:hidden">
<div class="a" style="left:22px;top:11.5px;width:33px;height:33px;border-radius:50%;background:#fce8d8"></div>
<div class="t" style="left:29.83px;top:20.7px;font-size:13px;line-height:15.6px;color:#8a5216;font-weight:bold;">TU</div>
<div class="t" style="left:69.00px;top:19.8px;font-size:15px;line-height:18.0px;color:#242424;font-weight:normal;transform:scaleX(0.9335);transform-origin:0 0;">Talanchuk Iryna University ...</div>
<svg style="left:265px;top:19px" width="17" height="18"><rect x="5.5" y="1" width="6" height="10" rx="3" fill="none" stroke="#242424" stroke-width="1.2"/><path d="M2.5 8.5 Q2.5 14 8.5 14 Q14.5 14 14.5 8.5 M8.5 14 L8.5 17" fill="none" stroke="#242424" stroke-width="1.2"/><path d="M1 1 L16 16.5" stroke="#f5f5f5" stroke-width="2.6"/><path d="M1 1 L16 16.5" stroke="#242424" stroke-width="1.2"/></svg>
<div class="a" style="left:22px;top:61.5px;width:33px;height:33px;border-radius:50%;background:#9a9a9a"></div>
<svg style="left:30px;top:69px" width="17" height="18"><circle cx="8.5" cy="4.5" r="3.6" fill="none" stroke="#fff" stroke-width="1.2"/><path d="M1.5 10.5 L15.5 10.5 Q16 16.5 8.5 16.8 Q1 16.5 1.5 10.5Z" fill="none" stroke="#fff" stroke-width="1.2"/></svg>
<div class="t" style="left:69.00px;top:69.8px;font-size:15px;line-height:18.0px;color:#242424;font-weight:normal;transform:scaleX(0.9100);transform-origin:0 0;">Аліна Тка...</div>
<div class="t" style="left:150.00px;top:69.8px;font-size:15px;line-height:18.0px;color:#424242;font-weight:normal;transform:scaleX(0.9710);transform-origin:0 0;">(не проверено)</div>
<svg style="left:265px;top:69px" width="17" height="18"><rect x="5.5" y="1" width="6" height="10" rx="3" fill="none" stroke="#242424" stroke-width="1.2"/><path d="M2.5 8.5 Q2.5 14 8.5 14 Q14.5 14 14.5 8.5 M8.5 14 L8.5 17" fill="none" stroke="#242424" stroke-width="1.2"/><path d="M1 1 L16 16.5" stroke="#f5f5f5" stroke-width="2.6"/><path d="M1 1 L16 16.5" stroke="#242424" stroke-width="1.2"/></svg>
<div class="a" style="left:22px;top:111.5px;width:33px;height:33px;border-radius:50%;background:#9a9a9a"></div>
<svg style="left:30px;top:119px" width="17" height="18"><circle cx="8.5" cy="4.5" r="3.6" fill="none" stroke="#fff" stroke-width="1.2"/><path d="M1.5 10.5 L15.5 10.5 Q16 16.5 8.5 16.8 Q1 16.5 1.5 10.5Z" fill="none" stroke="#fff" stroke-width="1.2"/></svg>
<div class="t" style="left:69.00px;top:119.8px;font-size:15px;line-height:18.0px;color:#242424;font-weight:normal;transform:scaleX(0.9421);transform-origin:0 0;">Божидар ...</div>
<div class="t" style="left:150.00px;top:119.8px;font-size:15px;line-height:18.0px;color:#424242;font-weight:normal;transform:scaleX(0.9710);transform-origin:0 0;">(не проверено)</div>
<svg style="left:265px;top:119px" width="17" height="18"><rect x="5.5" y="1" width="6" height="10" rx="3" fill="none" stroke="#242424" stroke-width="1.2"/><path d="M2.5 8.5 Q2.5 14 8.5 14 Q14.5 14 14.5 8.5 M8.5 14 L8.5 17" fill="none" stroke="#242424" stroke-width="1.2"/><path d="M1 1 L16 16.5" stroke="#f5f5f5" stroke-width="2.6"/><path d="M1 1 L16 16.5" stroke="#242424" stroke-width="1.2"/></svg>
<div class="a" style="left:22px;top:161.5px;width:33px;height:33px;border-radius:50%;background:#9a9a9a"></div>
<svg style="left:30px;top:169px" width="17" height="18"><circle cx="8.5" cy="4.5" r="3.6" fill="none" stroke="#fff" stroke-width="1.2"/><path d="M1.5 10.5 L15.5 10.5 Q16 16.5 8.5 16.8 Q1 16.5 1.5 10.5Z" fill="none" stroke="#fff" stroke-width="1.2"/></svg>
<div class="t" style="left:69.00px;top:169.8px;font-size:15px;line-height:18.0px;color:#242424;font-weight:normal;transform:scaleX(0.9055);transform-origin:0 0;">Надія Вол...</div>
<div class="t" style="left:150.00px;top:169.8px;font-size:15px;line-height:18.0px;color:#424242;font-weight:normal;transform:scaleX(0.9710);transform-origin:0 0;">(не проверено)</div>
<svg style="left:265px;top:169px" width="17" height="18"><rect x="5.5" y="1" width="6" height="10" rx="3" fill="none" stroke="#242424" stroke-width="1.2"/><path d="M2.5 8.5 Q2.5 14 8.5 14 Q14.5 14 14.5 8.5 M8.5 14 L8.5 17" fill="none" stroke="#242424" stroke-width="1.2"/><path d="M1 1 L16 16.5" stroke="#f5f5f5" stroke-width="2.6"/><path d="M1 1 L16 16.5" stroke="#242424" stroke-width="1.2"/></svg>
<div class="a" style="left:22px;top:211.5px;width:33px;height:33px;border-radius:50%;background:#d2ead9"></div>
<div class="t" style="left:29.11px;top:220.7px;font-size:13px;line-height:15.6px;color:#1d6a3a;font-weight:bold;">AH</div>
<div class="t" style="left:69.00px;top:219.8px;font-size:15px;line-height:18.0px;color:#242424;font-weight:normal;transform:scaleX(0.9621);transform-origin:0 0;">Ahmedin ...</div>
<div class="t" style="left:150.00px;top:219.8px;font-size:15px;line-height:18.0px;color:#424242;font-weight:normal;transform:scaleX(0.9710);transform-origin:0 0;">(не проверено)</div>
<svg style="left:265px;top:219px" width="17" height="18"><rect x="5.5" y="1" width="6" height="10" rx="3" fill="none" stroke="#242424" stroke-width="1.2"/><path d="M2.5 8.5 Q2.5 14 8.5 14 Q14.5 14 14.5 8.5 M8.5 14 L8.5 17" fill="none" stroke="#242424" stroke-width="1.2"/><path d="M1 1 L16 16.5" stroke="#f5f5f5" stroke-width="2.6"/><path d="M1 1 L16 16.5" stroke="#242424" stroke-width="1.2"/></svg>
<div class="a" style="left:22px;top:261.5px;width:33px;height:33px;border-radius:50%;background:#f1d6cf"></div>
<div class="t" style="left:29.11px;top:270.7px;font-size:13px;line-height:15.6px;color:#7a1d12;font-weight:bold;">AK</div>
<div class="t" style="left:69.00px;top:269.8px;font-size:15px;line-height:18.0px;color:#242424;font-weight:normal;transform:scaleX(0.9187);transform-origin:0 0;">Alla Kasych</div>
<svg style="left:265px;top:269px" width="17" height="18"><rect x="5.5" y="1" width="6" height="10" rx="3" fill="none" stroke="#242424" stroke-width="1.2"/><path d="M2.5 8.5 Q2.5 14 8.5 14 Q14.5 14 14.5 8.5 M8.5 14 L8.5 17" fill="none" stroke="#242424" stroke-width="1.2"/><path d="M1 1 L16 16.5" stroke="#f5f5f5" stroke-width="2.6"/><path d="M1 1 L16 16.5" stroke="#242424" stroke-width="1.2"/></svg>
<div class="a" style="left:22px;top:311.5px;width:33px;height:33px;border-radius:50%;background:#f5d4de"></div>
<div class="t" style="left:29.11px;top:320.7px;font-size:13px;line-height:15.6px;color:#7a1840;font-weight:bold;">AB</div>
<div class="t" style="left:69.00px;top:319.8px;font-size:15px;line-height:18.0px;color:#242424;font-weight:normal;transform:scaleX(0.9530);transform-origin:0 0;">Amira Bouziri</div>
<svg style="left:265px;top:319px" width="17" height="18"><rect x="5.5" y="1" width="6" height="10" rx="3" fill="none" stroke="#242424" stroke-width="1.2"/><path d="M2.5 8.5 Q2.5 14 8.5 14 Q14.5 14 14.5 8.5 M8.5 14 L8.5 17" fill="none" stroke="#242424" stroke-width="1.2"/><path d="M1 1 L16 16.5" stroke="#f5f5f5" stroke-width="2.6"/><path d="M1 1 L16 16.5" stroke="#242424" stroke-width="1.2"/></svg>
<div class="a" style="left:22px;top:361.5px;width:33px;height:33px;border-radius:50%;background:#fdeec4"></div>
<div class="t" style="left:28.39px;top:370.7px;font-size:13px;line-height:15.6px;color:#6a4a0a;font-weight:bold;">AM</div>
<div class="t" style="left:69.00px;top:369.8px;font-size:15px;line-height:18.0px;color:#242424;font-weight:normal;transform:scaleX(0.9467);transform-origin:0 0;">Andjela M...</div>
<div class="t" style="left:150.00px;top:369.8px;font-size:15px;line-height:18.0px;color:#424242;font-weight:normal;transform:scaleX(0.9710);transform-origin:0 0;">(не проверено)</div>
<svg style="left:265px;top:369px" width="17" height="18"><rect x="5.5" y="1" width="6" height="10" rx="3" fill="none" stroke="#242424" stroke-width="1.2"/><path d="M2.5 8.5 Q2.5 14 8.5 14 Q14.5 14 14.5 8.5 M8.5 14 L8.5 17" fill="none" stroke="#242424" stroke-width="1.2"/><path d="M1 1 L16 16.5" stroke="#f5f5f5" stroke-width="2.6"/><path d="M1 1 L16 16.5" stroke="#242424" stroke-width="1.2"/></svg>
<div class="a" style="left:22px;top:411.5px;width:33px;height:33px;border-radius:50%;background:#cfd9ee"></div>
<div class="t" style="left:29.11px;top:420.7px;font-size:13px;line-height:15.6px;color:#102a66;font-weight:bold;">AD</div>
<div class="t" style="left:69.00px;top:419.8px;font-size:15px;line-height:18.0px;color:#242424;font-weight:normal;transform:scaleX(0.9334);transform-origin:0 0;">Andrijana Bojadzievska Da...</div>
<svg style="left:265px;top:419px" width="17" height="18"><rect x="5.5" y="1" width="6" height="10" rx="3" fill="none" stroke="#242424" stroke-width="1.2"/><path d="M2.5 8.5 Q2.5 14 8.5 14 Q14.5 14 14.5 8.5 M8.5 14 L8.5 17" fill="none" stroke="#242424" stroke-width="1.2"/><path d="M1 1 L16 16.5" stroke="#f5f5f5" stroke-width="2.6"/><path d="M1 1 L16 16.5" stroke="#242424" stroke-width="1.2"/></svg>
<div class="a" style="left:22px;top:461.5px;width:33px;height:33px;border-radius:50%;background:#dfe4da"></div>
<div class="t" style="left:30.31px;top:470.7px;font-size:13px;line-height:15.6px;color:#2a3d22;font-weight:bold;">AT</div>
<div class="t" style="left:69.00px;top:469.8px;font-size:15px;line-height:18.0px;color:#242424;font-weight:normal;transform:scaleX(0.9152);transform-origin:0 0;">Asli Toksa...</div>
<div class="t" style="left:150.00px;top:469.8px;font-size:15px;line-height:18.0px;color:#424242;font-weight:normal;transform:scaleX(0.9710);transform-origin:0 0;">(не проверено)</div>
<svg style="left:265px;top:469px" width="17" height="18"><rect x="5.5" y="1" width="6" height="10" rx="3" fill="none" stroke="#242424" stroke-width="1.2"/><path d="M2.5 8.5 Q2.5 14 8.5 14 Q14.5 14 14.5 8.5 M8.5 14 L8.5 17" fill="none" stroke="#242424" stroke-width="1.2"/><path d="M1 1 L16 16.5" stroke="#f5f5f5" stroke-width="2.6"/><path d="M1 1 L16 16.5" stroke="#242424" stroke-width="1.2"/></svg>
<div class="a" style="left:22px;top:511.5px;width:33px;height:33px;border-radius:50%;background:#f5d6d0"></div>
<div class="t" style="left:29.47px;top:520.7px;font-size:13px;line-height:15.6px;color:#7a1d12;font-weight:bold;">AS</div>
<svg style="left:265px;top:519px" width="17" height="18"><rect x="5.5" y="1" width="6" height="10" rx="3" fill="none" stroke="#242424" stroke-width="1.2"/><path d="M2.5 8.5 Q2.5 14 8.5 14 Q14.5 14 14.5 8.5 M8.5 14 L8.5 17" fill="none" stroke="#242424" stroke-width="1.2"/><path d="M1 1 L16 16.5" stroke="#f5f5f5" stroke-width="2.6"/><path d="M1 1 L16 16.5" stroke="#242424" stroke-width="1.2"/></svg>
</div>
<div class="a" style="left:1590px;top:195px;width:6px;height:631px;border-radius:3px;background:#7d7d7d"></div>
<div class="a" style="left:0;top:850px;width:1600px;height:50px;background:linear-gradient(90deg,#c8e1e7 0%,#c6e6e5 15%,#c2e9e1 35%,#cce8da 45%,#e2e3d2 53%,#eddfcd 62%,#efdfcc 72%,#eee0c8 82%,#e9e3c6 92%,#e1e6c4 100%);border-top:1px solid #d0d4d0"></div>
<svg style="left:19px;top:860px" width="28" height="22"><defs><linearGradient id="cl" x1="0" y1="0" x2="0" y2="1"><stop offset="0" stop-color="#dbe8fb"/><stop offset="1" stop-color="#9ab8ee"/></linearGradient></defs><path d="M6 20 Q1 20 1 15.5 Q1 11 5.5 11 Q6 5 12.5 5 Q18.5 5 19.5 10 Q26.5 10 26.5 15 Q26.5 20 21 20Z" fill="url(#cl)"/></svg>
<div class="t" style="left:54.00px;top:858.7px;font-size:13px;line-height:15.6px;color:#1a1a1a;font-weight:normal;transform:scaleX(0.8263);transform-origin:0 0;">10°C</div>
<div class="t" style="left:54.00px;top:875.7px;font-size:13px;line-height:15.6px;color:#5a5a5a;font-weight:normal;transform:scaleX(0.9637);transform-origin:0 0;">Cloudy</div>
<svg style="left:419px;top:863px" width="24" height="24"><defs><linearGradient id="wg" x1="0" y1="0" x2="1" y2="1"><stop offset="0" stop-color="#50c4f8"/><stop offset="1" stop-color="#0a78d8"/></linearGradient></defs><rect x="0" y="0" width="11.4" height="11.4" rx="1" fill="url(#wg)"/><rect x="12.6" y="0" width="11.4" height="11.4" rx="1" fill="url(#wg)"/><rect x="0" y="12.6" width="11.4" height="11.4" rx="1" fill="url(#wg)"/><rect x="12.6" y="12.6" width="11.4" height="11.4" rx="1" fill="url(#wg)"/></svg>
<div class="a" style="left:458px;top:859px;width:227px;height:32px;border-radius:16px;background:#e8f5f3;border:1px solid #cfdcda"></div>
<svg style="left:469px;top:867px" width="16" height="16"><circle cx="6.5" cy="6.5" r="5.3" fill="none" stroke="#1a1a1a" stroke-width="1.7"/><path d="M10.5 10.5 L15 15" stroke="#1a1a1a" stroke-width="1.9"/></svg>
<div class="t" style="left:495.00px;top:865.8px;font-size:15px;line-height:18.0px;color:#5a5a5a;font-weight:normal;transform:scaleX(0.9948);transform-origin:0 0;">Пошук</div>
<div class="a" style="left:631px;top:863px;width:49px;height:26px;border-radius:13px;background:linear-gradient(180deg,#c4e4ec 0%,#eae8e0 55%,#b8b870 75%,#9aaa50 100%);overflow:hidden"><div class="a" style="left:8px;top:5px;width:10px;height:8px;border-radius:50%;background:#fff;opacity:.8"></div><div class="a" style="left:29px;top:7px;width:9px;height:8px;border-radius:50%;background:#fff;opacity:.8"></div><div class="a" style="left:3px;top:7px;width:6px;height:13px;border-radius:3px 3px 4px 4px;background:#b8865a"></div><div class="a" style="left:14px;top:1px;width:11px;height:24px;border-radius:5px 5px 6px 6px;background:#bc8a5e"></div><div class="a" style="left:34px;top:3px;width:8px;height:18px;border-radius:4px 4px 5px 5px;background:#b8865a"></div></div>
<div class="a" style="left:699px;top:870px;width:19px;height:16px;background:#1a1a1a;border-radius:2px"></div>
<div class="a" style="left:705px;top:863px;width:19px;height:16px;background:linear-gradient(135deg,#ffffff 0%,#f0f0f0 50%,#b8b8b8 100%);border-radius:2px;opacity:.95"></div>
<svg style="left:744px;top:862px" width="27" height="25"><defs><linearGradient id="cp1" x1="0" y1="0" x2="0" y2="1"><stop offset="0" stop-color="#1a8af0"/><stop offset=".5" stop-color="#40c880"/><stop offset="1" stop-color="#f0c020"/></linearGradient><linearGradient id="cp2" x1="0" y1="0" x2="0" y2="1"><stop offset="0" stop-color="#c060e0"/><stop offset=".6" stop-color="#f05080"/><stop offset="1" stop-color="#f08040"/></linearGradient></defs><path d="M9 2 Q10.5 0.5 13 0.5 L16 0.5 Q18 0.5 17.5 3 L12.5 21 Q11.5 24 8.5 24 L4 24 Q1.5 24 2.5 21 L5 12 Q6 8 9 2Z" fill="url(#cp1)"/><path d="M18 24 Q16.5 24.5 14 24.5 L11 24.5 Q9 24.5 9.5 22 L14.5 4 Q15.5 1 18.5 1 L23 1 Q25.5 1 24.5 4 L22 13 Q21 17 18 24Z" fill="url(#cp2)" opacity=".92"/></svg>
<svg style="left:790px;top:864px" width="26" height="22"><path d="M0 2 Q0 0 2 0 L9 0 L11 3 L24 3 Q26 3 26 5 L26 20 Q26 22 24 22 L2 22 Q0 22 0 20Z" fill="#f0b820"/><rect x="0" y="6" width="26" height="16" rx="1.5" fill="#ffd54a"/><rect x="6" y="15" width="14" height="7" rx="1" fill="#1a78d4"/></svg>
<svg style="left:837px;top:863px" width="24" height="24"><rect x="8" y="2" width="15" height="20" rx="1" fill="#fff" stroke="#2b579a" stroke-width="1.2"/><path d="M11 6 L21 6 M11 9 L21 9 M11 12 L21 12 M11 15 L21 15 M11 18 L21 18" stroke="#2b579a" stroke-width="1.1"/><rect x="0" y="4" width="14" height="16" rx="1.5" fill="#2b579a"/><text x="1.5" y="16.5" font-family="Liberation Sans" font-weight="bold" font-size="10" fill="#fff">W</text></svg>
<svg style="left:882px;top:862px" width="26" height="26"><path d="M12 2 A10.5 10.5 0 1 1 6.5 21.5 L1.5 23.5 L3.2 18.8 A10.5 10.5 0 0 1 12 2Z" fill="none" stroke="#1a7a3a" stroke-width="2.4"/><path d="M8 8 Q8 6.5 9.5 6.5 L11 9.5 L10 11 Q11.5 14 14 15 L15.5 14 L18 15.5 Q18 17.5 16 17.5 Q8 16.5 8 8Z" fill="#1a7a3a"/></svg>
<div class="a" style="left:895px;top:857px;width:17px;height:17px;border-radius:50%;background:#1a6ad8;border:1.5px solid #f2f8f2"></div>
<div class="t" style="left:900.44px;top:859.59px;font-size:11px;line-height:13.2px;color:#fff;font-weight:bold;">1</div>
<div class="a" style="left:921px;top:855px;width:40px;height:41px;border-radius:4px;background:rgba(255,255,255,.45)"></div>
<svg style="left:928px;top:863px" width="25" height="25"><circle cx="12.5" cy="12.5" r="12" fill="#db4437"/><path d="M12.5 12.5 L2.1 6.5 A12 12 0 0 0 12.5 24.5Z" fill="#0f9d58"/><path d="M12.5 12.5 L12.5 24.5 A12 12 0 0 0 22.9 6.5Z" fill="#ffcd40"/><path d="M12.5 12.5 L22.9 6.5 L12.5 6.5Z" fill="#db4437"/><circle cx="12.5" cy="12.5" r="5.6" fill="#fff"/><circle cx="12.5" cy="12.5" r="4.4" fill="#4285f4"/></svg>
<div class="a" style="left:933px;top:893px;width:16px;height:3px;border-radius:2px;background:#1a6ad8"></div>
<svg style="left:975px;top:864px" width="23" height="23"><circle cx="11.5" cy="11.5" r="11" fill="#2a9ad8"/><path d="M5 11 L17 6 L15 17 L11 14 L9 16.5 L9 13 L15 8 L8 12.5Z" fill="#fff"/></svg>
<div class="a" style="left:988px;top:858px;width:16px;height:11px;border-radius:4px;background:#e03030"></div>
<div class="t" style="left:989.50px;top:859.43px;font-size:8px;line-height:9.6px;color:#fff;font-weight:normal;transform:scaleX(0.9742);transform-origin:0 0;">..03</div>
<svg style="left:1020px;top:863px" width="25" height="25"><g fill="#6a7888"><circle cx="12.5" cy="12.5" r="9"/><rect x="10.5" y="0.5" width="4" height="6" rx="1" transform="rotate(0 12.5 12.5)"/><rect x="10.5" y="0.5" width="4" height="6" rx="1" transform="rotate(45 12.5 12.5)"/><rect x="10.5" y="0.5" width="4" height="6" rx="1" transform="rotate(90 12.5 12.5)"/><rect x="10.5" y="0.5" width="4" height="6" rx="1" transform="rotate(135 12.5 12.5)"/><rect x="10.5" y="0.5" width="4" height="6" rx="1" transform="rotate(180 12.5 12.5)"/><rect x="10.5" y="0.5" width="4" height="6" rx="1" transform="rotate(225 12.5 12.5)"/><rect x="10.5" y="0.5" width="4" height="6" rx="1" transform="rotate(270 12.5 12.5)"/><rect x="10.5" y="0.5" width="4" height="6" rx="1" transform="rotate(315 12.5 12.5)"/></g><circle cx="12.5" cy="12.5" r="5" fill="#1a6ad8" stroke="#f0f0f0" stroke-width="1.5"/></svg>
<svg style="left:1067px;top:864px" width="23" height="23"><defs><linearGradient id="ph" x1="0" y1="0" x2="1" y2="1"><stop offset="0" stop-color="#3a9af0"/><stop offset="1" stop-color="#7a4ad0"/></linearGradient></defs><rect x="0" y="0" width="22" height="22" rx="3" fill="url(#ph)"/><path d="M0 19 L8 9 L14 15 L22 11 L22 19 Q22 22 19 22 L3 22 Q0 22 0 19Z" fill="#5ad0f0"/><circle cx="16.5" cy="5" r="2" fill="#fff"/></svg>
<svg style="left:1112px;top:863px" width="24" height="24"><rect x="8" y="2" width="15" height="20" rx="1" fill="#fff" stroke="#1d6f42" stroke-width="1.2"/><path d="M11 6 L21 6 M11 10 L21 10 M11 14 L21 14 M11 18 L21 18 M16 3 L16 21" stroke="#1d6f42" stroke-width="1"/><rect x="0" y="3" width="14" height="18" rx="1.5" fill="#1d6f42"/><text x="2.5" y="16.5" font-family="Liberation Sans" font-weight="bold" font-size="11" fill="#fff">X</text></svg>
<div class="a" style="left:1157px;top:862px;width:26px;height:26px;border-radius:50%;background:#0b5cff"></div>
<div class="t" style="left:1163.00px;top:871.85px;font-size:6.5px;line-height:7.8px;color:#fff;font-weight:bold;transform:scaleX(0.8243);transform-origin:0 0;">zoom</div>
<div class="a" style="left:800px;top:892px;width:6px;height:3px;border-radius:2px;background:#7a7a7a"></div>
<div class="a" style="left:846px;top:892px;width:6px;height:3px;border-radius:2px;background:#7a7a7a"></div>
<div class="a" style="left:892px;top:892px;width:6px;height:3px;border-radius:2px;background:#7a7a7a"></div>
<div class="a" style="left:983px;top:892px;width:6px;height:3px;border-radius:2px;background:#7a7a7a"></div>
<div class="a" style="left:1029px;top:892px;width:6px;height:3px;border-radius:2px;background:#7a7a7a"></div>
<div class="a" style="left:1075px;top:892px;width:6px;height:3px;border-radius:2px;background:#7a7a7a"></div>
<div class="a" style="left:1121px;top:892px;width:6px;height:3px;border-radius:2px;background:#7a7a7a"></div>
<div class="a" style="left:1167px;top:892px;width:6px;height:3px;border-radius:2px;background:#7a7a7a"></div>
<svg style="left:1292px;top:871px" width="14" height="8"><path d="M1 7 L7 1 L13 7" fill="none" stroke="#1a1a1a" stroke-width="1.4"/></svg>
<svg style="left:1322px;top:866px" width="20" height="18"><path d="M3 8 A7 7 0 0 1 15.5 4 M15.5 1 L15.5 4.5 L12 4.5 M16 11 A7 7 0 0 1 3.5 14 M3.5 17 L3.5 13.5 L7 13.5" fill="none" stroke="#2a2a2a" stroke-width="1.3"/><circle cx="14" cy="13" r="3.5" fill="#1a6ad8"/></svg>
<svg style="left:1358px;top:866px" width="14" height="19"><rect x="4" y="1" width="6" height="10" rx="3" fill="none" stroke="#1a5ad0" stroke-width="1.5"/><path d="M1.3 8 Q1.3 14 7 14 Q12.7 14 12.7 8 M7 14 L7 17.5" fill="none" stroke="#1a5ad0" stroke-width="1.5"/></svg>
<div class="t" style="left:1391.00px;top:858.7px;font-size:13px;line-height:15.6px;color:#1a1a1a;font-weight:normal;transform:scaleX(0.9790);transform-origin:0 0;">УКР</div>
<div class="t" style="left:1389.00px;top:873.7px;font-size:13px;line-height:15.6px;color:#1a1a1a;font-weight:normal;transform:scaleX(0.8304);transform-origin:0 0;">UKRE</div>
<svg style="left:1436px;top:868px" width="16" height="13"><path d="M1 5 Q8 -1.5 15 5 M3.5 7.5 Q8 3.5 12.5 7.5 M5.8 10 Q8 8 10.2 10" fill="none" stroke="#1a1a1a" stroke-width="1.3"/><circle cx="8" cy="12" r="1.2" fill="#1a1a1a"/></svg>
<svg style="left:1461px;top:867px" width="17" height="16"><path d="M1 5.5 L4 5.5 L8 2 L8 14 L4 10.5 L1 10.5Z" fill="none" stroke="#1a1a1a" stroke-width="1.2"/><path d="M10.5 5.5 Q12 8 10.5 10.5 M12.8 3.5 Q15.5 8 12.8 12.5" fill="none" stroke="#1a1a1a" stroke-width="1.2"/></svg>
<svg style="left:1486px;top:869px" width="17" height="11"><rect x="0.7" y="0.7" width="13.5" height="9.6" rx="2" fill="none" stroke="#1a1a1a" stroke-width="1.3"/><rect x="2.5" y="2.5" width="4.5" height="6" fill="#1a1a1a"/><rect x="15" y="3.5" width="1.8" height="4" rx=".8" fill="#1a1a1a"/></svg>
<div class="t" style="left:1550.00px;top:859.7px;font-size:13px;line-height:15.6px;color:#1a1a1a;font-weight:normal;transform:scaleX(0.9474);transform-origin:0 0;">11:11</div>
<div class="t" style="left:1520.00px;top:875.7px;font-size:13px;line-height:15.6px;color:#1a1a1a;font-weight:normal;transform:scaleX(0.9203);transform-origin:0 0;">10.11.2025</div>
</body></html>
